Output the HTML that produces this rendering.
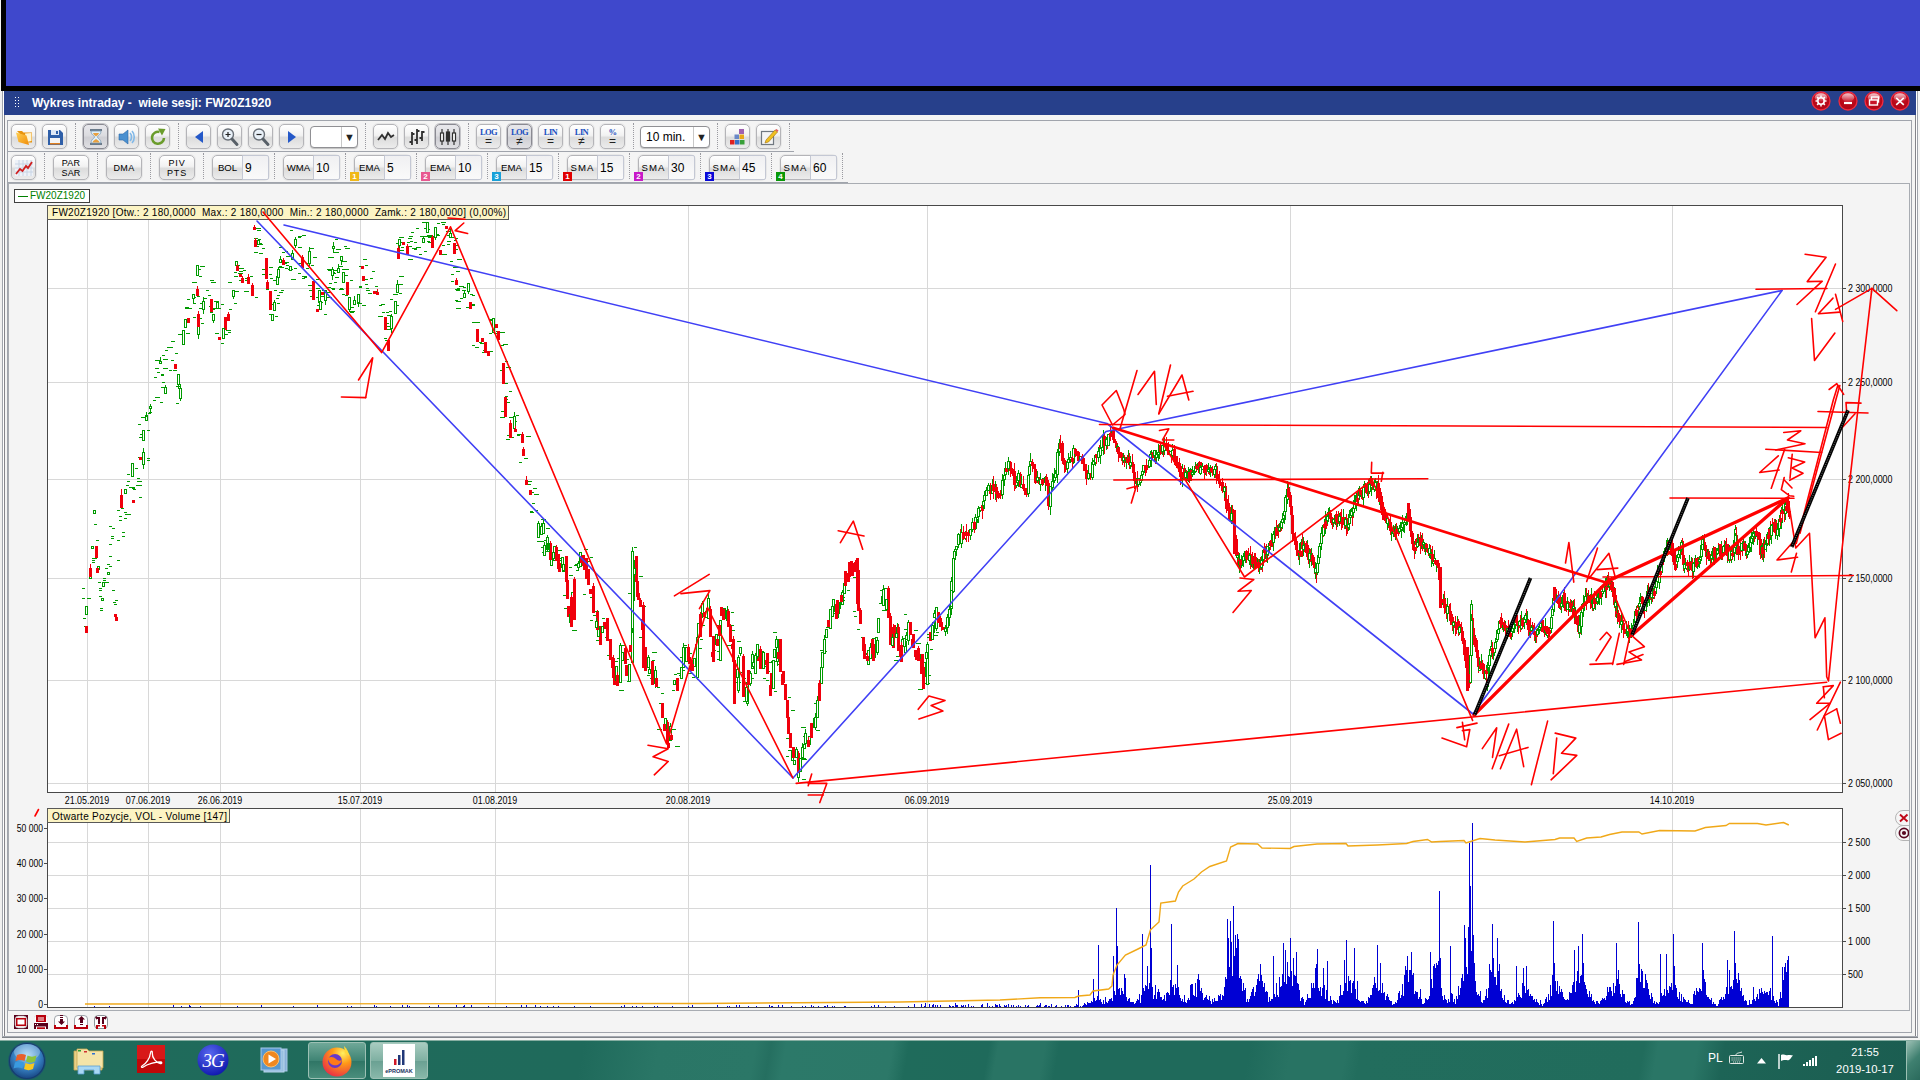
<!DOCTYPE html>
<html lang="pl"><head><meta charset="utf-8"><title>Wykres intraday - wiele sesji: FW20Z1920</title>
<style>
*{box-sizing:border-box;margin:0;padding:0}
html,body{width:1920px;height:1080px;overflow:hidden;background:#f4f4f4;font-family:"Liberation Sans",sans-serif;}
.abs{position:absolute}
#top{left:0;top:0;width:1920px;height:86px;background:#3f48cc}
#blk{left:0;top:86px;width:1920px;height:5px;background:#000}
#blkl{left:0;top:0;width:6px;height:91px;background:#000}
#title{left:4px;top:91px;width:1912px;z-index:2;height:24px;background:#27408b;color:#fff;font-weight:bold;font-size:12px;line-height:24px;}
#title span{position:absolute;left:28px;top:0;white-space:nowrap;letter-spacing:0px}
#wl{left:0;top:91px;width:5px;height:949px;background:linear-gradient(90deg,#f0f0f0 0,#f0f0f0 2px,#a0a4ac 2px,#a0a4ac 3px,#fff 3px,#fff 4px,#84848a 4px)}
#wcol{left:0;top:0;width:1px;height:91px;background:#f4f4f4}
#wr{left:1915px;top:91px;width:5px;height:949px;background:linear-gradient(90deg,#84848a 0,#84848a 1px,#fff 1px,#fff 2px,#a0a4ac 2px,#a0a4ac 3px,#f4f4f4 3px)}
#body{left:5px;top:115px;width:1910px;height:925px;background:#f4f4f4}
#fb{left:2px;top:1036px;width:1916px;height:2px;background:linear-gradient(#a4a8b0 0,#a4a8b0 1px,#80848a 1px);z-index:1}
#fb2{left:0;top:1038px;width:1920px;height:2px;background:#f4f4f4;z-index:1}
#outer{left:7px;top:120px;width:1905px;height:913px;border:1px solid #a0a4ac;background:#f4f4f4}
#inner{left:8px;top:183px;width:1902px;height:828px;border:1px solid #a8acb2;background:#f4f4f4}
.tb{position:absolute;height:25px;border:1px solid #b4b4b8;border-radius:5px;background:linear-gradient(#ffffff,#f2f2f2 45%,#dcdcdc 55%,#ececec);box-shadow:0 0 0 1px #e8e8e8}
.tb.on{border:1px solid #8a8a92;background:linear-gradient(#e8e8ec,#dcdce0 45%,#cfcfd4 55%,#e0e0e4);box-shadow:0 0 0 1px #c4c4c8}
.sep{position:absolute;width:0;border-left:1px dotted #9a9aa0;height:26px}
.lab{position:absolute;font-size:10px;color:#000;text-align:center;line-height:9px;white-space:nowrap}
.inp{position:absolute;height:25px;border:1px solid #c4c8d4;border-left:1px solid #c4c8d4;background:linear-gradient(#f0f0f2,#fafafa);font-size:12px;line-height:24px;padding-left:2px;border-radius:0 2px 2px 0}
.mk{position:absolute;width:9px;height:9px;color:#fff;font-size:8px;font-weight:bold;line-height:9px;text-align:center}
.cb{position:absolute;height:22px;border:1px solid #909094;border-radius:4px;background:#fff;font-size:12px;line-height:20px;padding-left:5px;box-shadow:0 1px 1px #c0c0c0}
.cb i{position:absolute;right:0;top:0;width:16px;height:20px;border-left:1px solid #c8c8c8;font-style:normal;font-size:11px;text-align:center;line-height:20px;color:#222}
#task{left:0;top:1040px;width:1920px;height:40px;background:linear-gradient(100deg,#1f6b5b 0px,#1f6a5b 575px,#2a7666 650px,#2b7767 745px,#256f60 760px,#2c7969 775px,#2c7868 880px,#1f6b5b 896px,#1f6a5b 975px,#297464 984px,#297464 1030px,#1f6a5b 1044px,#1f6a5b 1232px,#287363 1273px,#287363 1327px,#226d5d 1342px,#216c5c 1620px,#2a7666 1634px,#2a7666 1673px,#1d6456 1700px,#1b5c50 1920px);border-top:1px solid #86aea2}
.tk{position:absolute;top:1042px;height:37px;width:58px;border:1px solid #9cc0b4;border-radius:3px;background:linear-gradient(#6fa898,#3f8474 50%,#2f7565 51%,#4a8e7c)}
.tray{position:absolute;color:#fff;font-size:12px;white-space:nowrap}
</style></head><body>
<div class="abs" id="top"></div><div class="abs" id="blk"></div><div class="abs" id="blkl"></div>
<div class="abs" id="wcol"></div><div class="abs" id="wl"></div><div class="abs" id="wr"></div>
<div class="abs" id="title"><span>Wykres intraday -&nbsp; wiele sesji: FW20Z1920</span></div>
<div class="abs" id="body"></div><div class="abs" id="fb"></div><div class="abs" id="fb2"></div><div class="abs" id="outer"></div><div class="abs" id="inner"></div>
<div class="abs" style="left:8px;top:151px;width:786px;height:1px;background:#a0a4ac"></div><div class="abs" style="left:8px;top:182px;width:840px;height:1px;background:#a0a4ac"></div><div class="tb" style="left:11px;top:124px;width:25px"><svg width="22" height="22" viewBox="0 0 22 22" style="position:absolute;left:.5px;top:.5px"><defs><linearGradient id="fg" x1="0" y1="0" x2="1" y2="1"><stop offset="0" stop-color="#ffd050"/><stop offset="1" stop-color="#f08c08"/></linearGradient></defs><path d="M4 5h5l1.500 1.500h8.500v10h-4z" fill="#e8940c"/><path d="M12 7.500l6.500-.5v8l-5 1z" fill="#fff4d0"/><path d="M3 6.500l10.500 3 2.500 9.500-10.500-3z" fill="url(#fg)"/></svg></div><div class="tb" style="left:42px;top:124px;width:25px"><svg width="22" height="22" viewBox="0 0 22 22" style="position:absolute;left:.5px;top:.5px"><path d="M4 4h12l3 3v12H4z" fill="#2f5fa8"/><rect x="7" y="4" width="8" height="5" fill="#dfe8f4"/><rect x="12" y="5" width="2" height="3" fill="#2f5fa8"/><rect x="6" y="12" width="10" height="6" fill="#f4f4f4"/><rect x="6" y="17" width="10" height="1.5" fill="#e08020"/></svg></div><div class="tb on" style="left:83px;top:124px;width:25px"><svg width="22" height="22" viewBox="0 0 22 22" style="position:absolute;left:.5px;top:.5px"><path d="M5 3h12v2H5zM5 17h12v2H5z" fill="#6a7a8a"/><path d="M6 5h10c0 4-3.5 4.5-3.5 6s3.5 2 3.5 6H6c0-4 3.5-4.500 3.500-6S6 9 6 5z" fill="#dff0fa" stroke="#7a98b0" stroke-width=".8"/><path d="M8 7h6c-.5 2-2 2.500-3 3.500C10 9.500 8.500 9 8 7zM7.500 16.500c.5-2 2-2.500 3.500-3.500 1.500 1 3 1.500 3.500 3.500z" fill="#e8a040"/></svg></div><div class="tb" style="left:114px;top:124px;width:25px"><svg width="22" height="22" viewBox="0 0 22 22" style="position:absolute;left:.5px;top:.5px"><path d="M3 8h4l5-4v14l-5-4H3z" fill="#4a90d0" stroke="#2a68a8" stroke-width=".6"/><path d="M14 7c2 2 2 6 0 8M16 5c3 3 3 9 0 12" stroke="#80b8e8" stroke-width="1.600" fill="none"/></svg></div><div class="tb" style="left:145px;top:124px;width:25px"><svg width="22" height="22" viewBox="0 0 22 22" style="position:absolute;left:.5px;top:.5px"><path d="M17 12a6 6 0 1 1-4.500-6" stroke="#6a9c2c" stroke-width="2.600" fill="none"/><path d="M11 2.500l7.500.5-3.500 6.500z" fill="#6a9c2c"/></svg></div><div class="tb" style="left:186px;top:124px;width:25px"><svg width="22" height="22" viewBox="0 0 22 22" style="position:absolute;left:.5px;top:.5px"><path d="M15 5v12l-8-6z" fill="#2458c8"/></svg></div><div class="tb" style="left:217px;top:124px;width:25px"><svg width="22" height="22" viewBox="0 0 22 22" style="position:absolute;left:.5px;top:.5px"><circle cx="9" cy="8.500" r="5.500" fill="#e8f0f8" stroke="#6a7078" stroke-width="1.400"/><path d="M13 13l5 5.500" stroke="#586068" stroke-width="3" stroke-linecap="round"/><path d="M6.500 8.500h5M9 6v5" stroke="#222" stroke-width="1.200"/></svg></div><div class="tb" style="left:248px;top:124px;width:25px"><svg width="22" height="22" viewBox="0 0 22 22" style="position:absolute;left:.5px;top:.5px"><circle cx="9" cy="8.500" r="5.500" fill="#e8f0f8" stroke="#6a7078" stroke-width="1.400"/><path d="M13 13l5 5.500" stroke="#586068" stroke-width="3" stroke-linecap="round"/><path d="M6.500 8.500h5" stroke="#222" stroke-width="1.200"/></svg></div><div class="tb" style="left:279px;top:124px;width:25px"><svg width="22" height="22" viewBox="0 0 22 22" style="position:absolute;left:.5px;top:.5px"><path d="M7 5v12l8-6z" fill="#2458c8"/></svg></div><div class="tb" style="left:373px;top:124px;width:25px"><svg width="22" height="22" viewBox="0 0 22 22" style="position:absolute;left:.5px;top:.5px"><path d="M3 14l4-5 3 4 3-6 3 4 3-2" stroke="#303030" stroke-width="1.800" fill="none"/></svg></div><div class="tb" style="left:404px;top:124px;width:25px"><svg width="22" height="22" viewBox="0 0 22 22" style="position:absolute;left:.5px;top:.5px"><path d="M6 6v13M3.500 16H6M6 8h2.500M11 3v15M8.500 14H11M11 5h2.500M16 5v10M13.500 12H16M16 6h2.500" stroke="#303030" stroke-width="1.800" fill="none"/></svg></div><div class="tb on" style="left:435px;top:124px;width:25px"><svg width="22" height="22" viewBox="0 0 22 22" style="position:absolute;left:.5px;top:.5px"><path d="M5 3v16M11 3v16M17 3v16" stroke="#303030" stroke-width="1.200"/><rect x="3.500" y="7" width="3" height="8" fill="#fff" stroke="#303030" stroke-width="1.200"/><rect x="9.500" y="6" width="3" height="9" fill="#303030" stroke="#303030" stroke-width="1.200"/><rect x="15.500" y="7" width="3" height="8" fill="#fff" stroke="#303030" stroke-width="1.200"/></svg></div><div class="tb" style="left:725px;top:124px;width:25px"><svg width="22" height="22" viewBox="0 0 22 22" style="position:absolute;left:.5px;top:.5px"><rect x="12" y="3" width="5" height="5" fill="#a060b0"/><rect x="7.500" y="8.500" width="4.500" height="4.500" fill="#6888c8"/><rect x="12.500" y="8.500" width="4.500" height="4.500" fill="#e8a818"/><rect x="3" y="14" width="4.500" height="4.500" fill="#e02020"/><rect x="8" y="14" width="4.500" height="4.500" fill="#3870c8"/><rect x="13" y="14" width="4.500" height="4.500" fill="#38a038"/></svg></div><div class="tb" style="left:756px;top:124px;width:25px"><svg width="22" height="22" viewBox="0 0 22 22" style="position:absolute;left:.5px;top:.5px"><rect x="3.500" y="5.500" width="12" height="13" fill="#f4f4f4" stroke="#707880" stroke-width="1.200"/><path d="M8 14l9-10 2.500 2-9 10-3.500 1z" fill="#f0c020" stroke="#a07010" stroke-width=".6"/><path d="M17 4l2.500 2 1-1.500-2-1.500z" fill="#e06060"/></svg></div><div class="sep" style="left:75px;top:123px"></div><div class="sep" style="left:178px;top:123px"></div><div class="sep" style="left:365px;top:123px"></div><div class="sep" style="left:468px;top:123px"></div><div class="sep" style="left:633px;top:123px"></div><div class="sep" style="left:717px;top:123px"></div><div class="sep" style="left:789px;top:123px"></div><div class="tb" style="left:476px;top:124px;width:25px"><div style="position:absolute;left:0;top:3px;width:23px;text-align:center;font-family:'Liberation Serif',serif;font-size:8.500px;font-weight:bold;line-height:9px;color:#2050c0;letter-spacing:-.6px">LOG</div><div style="position:absolute;left:0;top:10px;width:23px;text-align:center;font-size:12px;line-height:12px;color:#222">=</div></div><div class="tb on" style="left:507px;top:124px;width:25px"><div style="position:absolute;left:0;top:3px;width:23px;text-align:center;font-family:'Liberation Serif',serif;font-size:8.500px;font-weight:bold;line-height:9px;color:#2050c0;letter-spacing:-.6px">LOG</div><div style="position:absolute;left:0;top:10px;width:23px;text-align:center;font-size:12px;line-height:12px;color:#222">&ne;</div></div><div class="tb" style="left:538px;top:124px;width:25px"><div style="position:absolute;left:0;top:3px;width:23px;text-align:center;font-family:'Liberation Serif',serif;font-size:8.500px;font-weight:bold;line-height:9px;color:#2050c0;letter-spacing:-.6px">LIN</div><div style="position:absolute;left:0;top:10px;width:23px;text-align:center;font-size:12px;line-height:12px;color:#222">=</div></div><div class="tb" style="left:569px;top:124px;width:25px"><div style="position:absolute;left:0;top:3px;width:23px;text-align:center;font-family:'Liberation Serif',serif;font-size:8.500px;font-weight:bold;line-height:9px;color:#2050c0;letter-spacing:-.6px">LIN</div><div style="position:absolute;left:0;top:10px;width:23px;text-align:center;font-size:12px;line-height:12px;color:#222">&ne;</div></div><div class="tb" style="left:600px;top:124px;width:25px"><div style="position:absolute;left:0;top:3px;width:23px;text-align:center;font-family:'Liberation Serif',serif;font-size:8.500px;font-weight:bold;line-height:9px;color:#2050c0;letter-spacing:-.6px">%</div><div style="position:absolute;left:0;top:10px;width:23px;text-align:center;font-size:12px;line-height:12px;color:#222">=</div></div><div class="cb" style="left:310px;top:126px;width:48px"><i>&#9660;</i></div><div class="cb" style="left:640px;top:126px;width:70px">10 min.<i>&#9660;</i></div><div class="tb" style="left:11px;top:155px;width:25px"><svg width="22" height="22" viewBox="0 0 22 22" style="position:absolute;left:.5px;top:.5px"><rect x="2" y="3" width="18" height="16" fill="#eef2f8"/><path d="M2 7h18M2 11h18M2 15h18M6 3v16M10 3v16M14 3v16M18 3v16" stroke="#c8d4e4" stroke-width="1"/><path d="M3 17l4-5 2.500 2 3.500-5 2 2 4-6" stroke="#d02020" stroke-width="1.800" fill="none"/></svg></div><div class="sep" style="left:44px;top:153px"></div><div class="sep" style="left:97px;top:153px"></div><div class="sep" style="left:150px;top:153px"></div><div class="sep" style="left:203px;top:153px"></div><div class="tb" style="left:53px;top:155px;width:36px"><div class="lab" style="left:0;width:34px;top:2px;font-size:9px;line-height:10px;letter-spacing:.2px">PAR<br>SAR</div></div><div class="tb" style="left:106px;top:155px;width:36px"><div class="lab" style="left:0;width:34px;top:7px;font-size:9px;line-height:10px;letter-spacing:.3px">DMA</div></div><div class="tb" style="left:159px;top:155px;width:36px"><div class="lab" style="left:0;width:34px;top:2px;font-size:9px;line-height:10px;letter-spacing:.8px">PIV<br>PTS</div></div><div class="tb" style="left:212px;top:155px;width:57px"><div class="lab" style="left:0;width:29px;top:7px;font-size:9.6px;line-height:10px;letter-spacing:0">BOL</div></div><div class="inp" style="left:242px;top:155px;width:27px">9</div><div class="sep" style="left:274px;top:153px"></div><div class="tb" style="left:283px;top:155px;width:57px"><div class="lab" style="left:0;width:29px;top:7px;font-size:9.6px;line-height:10px;letter-spacing:0">WMA</div></div><div class="inp" style="left:313px;top:155px;width:27px">10</div><div class="sep" style="left:345px;top:153px"></div><div class="tb" style="left:354px;top:155px;width:57px"><div class="lab" style="left:0;width:29px;top:7px;font-size:9.6px;line-height:10px;letter-spacing:0">EMA</div></div><div class="inp" style="left:384px;top:155px;width:27px">5</div><div class="sep" style="left:416px;top:153px"></div><div class="mk" style="left:350px;top:172px;background:#f0b818">1</div><div class="tb" style="left:425px;top:155px;width:57px"><div class="lab" style="left:0;width:29px;top:7px;font-size:9.6px;line-height:10px;letter-spacing:0">EMA</div></div><div class="inp" style="left:455px;top:155px;width:27px">10</div><div class="sep" style="left:487px;top:153px"></div><div class="mk" style="left:421px;top:172px;background:#e85890">2</div><div class="tb" style="left:496px;top:155px;width:57px"><div class="lab" style="left:0;width:29px;top:7px;font-size:9.6px;line-height:10px;letter-spacing:0">EMA</div></div><div class="inp" style="left:526px;top:155px;width:27px">15</div><div class="sep" style="left:558px;top:153px"></div><div class="mk" style="left:492px;top:172px;background:#18a0d8">3</div><div class="tb" style="left:567px;top:155px;width:57px"><div class="lab" style="left:0;width:29px;top:7px;font-size:9.6px;line-height:10px;letter-spacing:1.100px">SMA</div></div><div class="inp" style="left:597px;top:155px;width:27px">15</div><div class="sep" style="left:629px;top:153px"></div><div class="mk" style="left:563px;top:172px;background:#e00000">1</div><div class="tb" style="left:638px;top:155px;width:57px"><div class="lab" style="left:0;width:29px;top:7px;font-size:9.6px;line-height:10px;letter-spacing:1.100px">SMA</div></div><div class="inp" style="left:668px;top:155px;width:27px">30</div><div class="sep" style="left:700px;top:153px"></div><div class="mk" style="left:634px;top:172px;background:#c818c8">2</div><div class="tb" style="left:709px;top:155px;width:57px"><div class="lab" style="left:0;width:29px;top:7px;font-size:9.6px;line-height:10px;letter-spacing:1.100px">SMA</div></div><div class="inp" style="left:739px;top:155px;width:27px">45</div><div class="sep" style="left:771px;top:153px"></div><div class="mk" style="left:705px;top:172px;background:#0808d8">3</div><div class="tb" style="left:780px;top:155px;width:57px"><div class="lab" style="left:0;width:29px;top:7px;font-size:9.6px;line-height:10px;letter-spacing:1.100px">SMA</div></div><div class="inp" style="left:810px;top:155px;width:27px">60</div><div class="sep" style="left:842px;top:153px"></div><div class="mk" style="left:776px;top:172px;background:#089808">4</div><div class="abs" style="left:14px;top:189px;width:76px;height:14px;border:1px solid #404040;background:#fff;font-size:10px;line-height:12px;color:#008000;white-space:nowrap"><span style="position:absolute;left:3px;top:6px;width:10px;height:1px;background:#008000"></span><span style="position:absolute;left:15px;top:0">FW20Z1920</span></div><svg class="abs" style="left:1811px;top:91px;z-index:3" width="20" height="20" viewBox="0 0 20 20"><defs><radialGradient id="rggear" cx=".5" cy=".25" r=".8"><stop offset="0" stop-color="#d82038"/><stop offset=".6" stop-color="#b80818"/><stop offset="1" stop-color="#b00818"/></radialGradient><linearGradient id="glgear" x1="0" y1="0" x2="0" y2="1"><stop offset="0" stop-color="#fff" stop-opacity=".75"/><stop offset="1" stop-color="#fff" stop-opacity=".05"/></linearGradient></defs><circle cx="10" cy="10" r="9" fill="url(#rggear)" stroke="#f02c40" stroke-width="1.300"/><ellipse cx="10" cy="6.500" rx="6.200" ry="4.200" fill="url(#glgear)"/><circle cx="10" cy="10" r="3.200" fill="none" stroke="#fff" stroke-width="1.600"/><path d="M10 4.500v2M10 13.500v2M4.500 10h2M13.500 10h2M6.100 6.100l1.400 1.400M12.500 12.500l1.400 1.400M6.100 13.900l1.400-1.400M12.500 7.500l1.400-1.400" stroke="#fff" stroke-width="1.500"/></svg><svg class="abs" style="left:1838px;top:91px;z-index:3" width="20" height="20" viewBox="0 0 20 20"><defs><radialGradient id="rgmin" cx=".5" cy=".25" r=".8"><stop offset="0" stop-color="#d82038"/><stop offset=".6" stop-color="#b80818"/><stop offset="1" stop-color="#b00818"/></radialGradient><linearGradient id="glmin" x1="0" y1="0" x2="0" y2="1"><stop offset="0" stop-color="#fff" stop-opacity=".75"/><stop offset="1" stop-color="#fff" stop-opacity=".05"/></linearGradient></defs><circle cx="10" cy="10" r="9" fill="url(#rgmin)" stroke="#f02c40" stroke-width="1.300"/><ellipse cx="10" cy="6.500" rx="6.200" ry="4.200" fill="url(#glmin)"/><path d="M6 12h8" stroke="#fff" stroke-width="2.200"/></svg><svg class="abs" style="left:1864px;top:91px;z-index:3" width="20" height="20" viewBox="0 0 20 20"><defs><radialGradient id="rgrest" cx=".5" cy=".25" r=".8"><stop offset="0" stop-color="#d82038"/><stop offset=".6" stop-color="#b80818"/><stop offset="1" stop-color="#b00818"/></radialGradient><linearGradient id="glrest" x1="0" y1="0" x2="0" y2="1"><stop offset="0" stop-color="#fff" stop-opacity=".75"/><stop offset="1" stop-color="#fff" stop-opacity=".05"/></linearGradient></defs><circle cx="10" cy="10" r="9" fill="url(#rgrest)" stroke="#f02c40" stroke-width="1.300"/><ellipse cx="10" cy="6.500" rx="6.200" ry="4.200" fill="url(#glrest)"/><rect x="7.500" y="6" width="7" height="5" fill="none" stroke="#fff" stroke-width="1.400"/><rect x="5.500" y="9" width="8" height="5" fill="#c81428" stroke="#fff" stroke-width="1.400"/></svg><svg class="abs" style="left:1890px;top:91px;z-index:3" width="20" height="20" viewBox="0 0 20 20"><defs><radialGradient id="rgx" cx=".5" cy=".25" r=".8"><stop offset="0" stop-color="#d82038"/><stop offset=".6" stop-color="#b80818"/><stop offset="1" stop-color="#b00818"/></radialGradient><linearGradient id="glx" x1="0" y1="0" x2="0" y2="1"><stop offset="0" stop-color="#fff" stop-opacity=".75"/><stop offset="1" stop-color="#fff" stop-opacity=".05"/></linearGradient></defs><circle cx="10" cy="10" r="9" fill="url(#rgx)" stroke="#f02c40" stroke-width="1.300"/><ellipse cx="10" cy="6.500" rx="6.200" ry="4.200" fill="url(#glx)"/><path d="M6.200 6.800l7.600 7M13.800 6.800l-7.600 7" stroke="#fff" stroke-width="1.600"/></svg><svg class="abs" style="left:15px;top:97px;z-index:3" width="5" height="12"><g fill="#fff"><rect x="0" y="0" width="1" height="1"/><rect x="0" y="3" width="1" height="1"/><rect x="0" y="6" width="1" height="1"/><rect x="0" y="9" width="1" height="1"/><rect x="3" y="0" width="1" height="1"/><rect x="3" y="3" width="1" height="1"/><rect x="3" y="6" width="1" height="1"/><rect x="3" y="9" width="1" height="1"/></g></svg><svg class="abs" style="left:0;top:0" width="1920" height="1080" viewBox="0 0 1920 1080" font-family="Liberation Sans, sans-serif"><rect x="47" y="206" width="1795" height="586" fill="#fff"/><rect x="47" y="808" width="1795" height="200" fill="#fff"/><path d="M47 288.5H1842M47 382.5H1842M47 479.5H1842M47 578.5H1842M47 680.5H1842M47 783.5H1842M87.5 206V792M87.5 808V1008M148.5 206V792M148.5 808V1008M220.5 206V792M220.5 808V1008M360.5 206V792M360.5 808V1008M495.5 206V792M495.5 808V1008M688.5 206V792M688.5 808V1008M927.5 206V792M927.5 808V1008M1290.5 206V792M1290.5 808V1008M1672.5 206V792M1672.5 808V1008M47 842.5H1842M47 875.5H1842M47 908.5H1842M47 941.5H1842M47 974.5H1842" stroke="#d8d8d8" stroke-width="1" fill="none" shape-rendering="crispEdges"/><defs><clipPath id="cpm"><rect x="47" y="206" width="1795" height="586"/></clipPath></defs><g clip-path="url(#cpm)"><path d="M147 460.5h3M147 458.5h3M138 457.5h3M138 424.5h3M139 437.5h5M140 434.5h3M141 417.5h4M147 430.5h3M149 412.5h3M148 413.5h3M145 415.5h3M153 400.5h3M155 397.5h5M157 372.5h3M155 368.5h4M155 360.5h5M162 382.5h3M154 377.5h3M160.5 357V361M162 355.5h3M163 368.5h5M163 359.5h5M161 374.5h3M161 387.5h3M160 402.5h3M161 375.5h3M167 347.5h3M171 341.5h4M165 350.5h3M170 347.5h3M171 360.5h3M169 370.5h3M175 353.5h3M173 370.5h4M176 403.5h3M176 386.5h3M177 386.5h3M180 334.5h3M178 334.5h5M186 333.5h4M189 308.5h3M185 308.5h4M187 299.5h3M185 307.5h4M193 297.5h3M197 296.5h3M192 282.5h5M200 266.5h5M198 269.5h3M199 276.5h3M193 303.5h3M193 317.5h3M201 323.5h3M203.5 297V301M203.5 310V314M200 303.5h4M199 308.5h3M199 318.5h3M206 290.5h3M204 298.5h3M210 280.5h4M211 282.5h5M212 308.5h5M214 301.5h5M208 295.5h3M210 312.5h3M216 308.5h5M209 306.5h4M212 308.5h4M212 309.5h3M221 304.5h3M215 333.5h4M221 343.5h3M226 330.5h5M224 326.5h3M224 334.5h4M228 332.5h3M225 318.5h4M228 282.5h4M235 291.5h4M234 303.5h3M229 309.5h3M236.5 266V270M238 273.5h5M237 265.5h3M239 271.5h4M234 272.5h3M234 276.5h4M239 268.5h5M244 291.5h5M243 270.5h3M239 280.5h5M245 280.5h5M245 278.5h5M250 276.5h3M255 297.5h3M247 283.5h3M256 228.5h5M257 230.5h4M256 246.5h3M260 244.5h3M254 252.5h4M254 238.5h4M262 248.5h3M258 239.5h3M259 253.5h4M259 243.5h3M265 267.5h3M269 274.5h3M262 269.5h4M270 278.5h3M269 267.5h4M262 274.5h5M269 297.5h3M266 289.5h3M275 316.5h3M269 314.5h5M277 295.5h3M270 304.5h4M277 303.5h3M276 298.5h3M277.5 272V276M279 292.5h4M274 290.5h3M281 290.5h3M279 266.5h3M273 280.5h4M282 252.5h3M286 262.5h3M279 247.5h4M279 267.5h5M285 251.5h3M286 256.5h5M284 262.5h3M285 268.5h3M283 263.5h4M288 269.5h5M286 265.5h3M294 268.5h3M291 279.5h5M298 236.5h4M298 247.5h4M290 230.5h3M292.5 250V253M298 237.5h3M302 235.5h4M294 244.5h3M297 263.5h5M298 273.5h3M304 277.5h3M306 268.5h3M302 278.5h3M302 276.5h5M311 265.5h3M306 263.5h3M310 248.5h4M313 257.5h4M310 296.5h3M309 290.5h3M316 279.5h3M308 285.5h5M319 305.5h3M320 302.5h3M317 305.5h3M324 314.5h3M319.5 303V307M322 290.5h3M316 288.5h4M316 297.5h3M320 296.5h5M327 297.5h5M329 283.5h3M332 273.5h4M331 288.5h4M327 292.5h3M327 287.5h4M327 287.5h3M332.5 267V269M332.5 276V280M328 270.5h3M327 269.5h4M336 249.5h5M335 239.5h3M331 257.5h3M336 252.5h3M328 257.5h3M334 252.5h3M334 282.5h3M332 289.5h3M332 272.5h3M332 272.5h3M334 270.5h4M342 269.5h4M335 277.5h4M341 261.5h5M341.5 261V265M338 266.5h5M345 248.5h5M343 261.5h4M344 246.5h3M339 289.5h5M346 269.5h3M344 275.5h4M340 288.5h3M350 280.5h3M342 294.5h3M349.5 310V312M345 295.5h3M350 311.5h5M350 312.5h4M357 303.5h5M351 307.5h3M359 287.5h3M362 305.5h4M359 266.5h3M365 265.5h3M363 259.5h4M366 290.5h4M365 279.5h3M365 284.5h3M359 286.5h3M366 288.5h3M369 293.5h3M368 293.5h3M370 278.5h3M372 271.5h3M375 286.5h3M381 304.5h4M374 291.5h4M382 312.5h3M378 316.5h5M386 323.5h3M379 305.5h3M389 311.5h3M387 315.5h5M387 329.5h4M384 338.5h3M385 340.5h4M391.5 314V316M391.5 329V333M386 312.5h3M387 326.5h3M387 315.5h3M390 299.5h3M396 305.5h3M393 294.5h5M398 284.5h5M399 276.5h5M399 293.5h3M400 250.5h4M396 243.5h4M401 242.5h3M401 247.5h3M399 237.5h5M408 259.5h5M410 241.5h3M411 232.5h3M416 228.5h3M407 242.5h3M409 236.5h4M408 238.5h4M409 246.5h3M414 242.5h3M419 254.5h3M412 248.5h5M418 247.5h3M420 236.5h5M414 249.5h3M416 247.5h4M427 229.5h3M424 251.5h3M424 236.5h5M427 235.5h5M424 228.5h5M428 237.5h4M422 222.5h5M427 236.5h5M428 242.5h5M427 241.5h3M429 235.5h3M436 234.5h3M431 236.5h5M437 223.5h3M442 254.5h5M437 235.5h3M447 235.5h5M442 224.5h3M441 222.5h5M442 245.5h3M447 244.5h3M446 231.5h4M451 237.5h3M455 249.5h3M454 240.5h3M447 241.5h4M455 245.5h4M457 259.5h5M455 238.5h3M453 267.5h3M450 261.5h3M456 271.5h4M451 274.5h3M456 267.5h4M459 286.5h5M451 281.5h3M457 288.5h3M455 289.5h5M462 290.5h3M455 300.5h3M460 298.5h3M463 287.5h3M456 301.5h5M456 308.5h5M456 290.5h4M472 295.5h3M470 294.5h3M463 290.5h3M472 305.5h3M466 307.5h3M472 304.5h3M472 322.5h3M475 322.5h5M472 345.5h3M479 342.5h3M475 347.5h4M484 344.5h3M483 350.5h3M488 351.5h5M480 343.5h5M482 352.5h3M484 351.5h3M496 331.5h3M490 319.5h3M494 324.5h3M490 320.5h3M489 333.5h3M502 332.5h3M499 332.5h3M494 333.5h3M501 345.5h3M504 344.5h4M503 344.5h3M500 370.5h4M505 361.5h3M506 367.5h5M505 383.5h3M504 405.5h3M501 411.5h3M500 417.5h5M507 402.5h3M505 396.5h3M505 399.5h3M509 391.5h3M513 421.5h4M507 435.5h5M506 439.5h4M509 417.5h4M516 415.5h3M510 437.5h4M518 434.5h3M517 435.5h3M526 436.5h5M517 434.5h3M519 462.5h3M524 458.5h4M527 484.5h4M529 492.5h5M527 481.5h5M534 494.5h5M533 488.5h4M532 503.5h3M530 512.5h4M530 511.5h3M541 541.5h3M541 519.5h5M540 528.5h4M535 510.5h3M546 528.5h4M541 547.5h3M537 541.5h5M546 551.5h3M542 552.5h4M544.5 542V545M544 540.5h3M551 554.5h5M557 560.5h5M562 571.5h3M562.5 568V570M558 550.5h4M559 558.5h3M569 575.5h4M564 608.5h5M563 595.5h4M572 630.5h5M575 564.5h4M569 567.5h3M574 565.5h3M576 570.5h3M584 549.5h4M587 561.5h3M590 557.5h3M583 594.5h3M585 573.5h4M590 620.5h3M594 611.5h5M590 597.5h3M600 631.5h4M593 615.5h3M596 640.5h3M602 618.5h3M608 639.5h3M605 637.5h3M613 661.5h5M607 655.5h3M619 674.5h3M619 690.5h5M622 645.5h3M624 659.5h5M617 658.5h3M620 656.5h3M622 654.5h3M627 681.5h3M628 593.5h3M633.5 556V560M634 547.5h3M635 560.5h3M639 576.5h4M642 606.5h4M639 637.5h4M647 675.5h3M648.5 655V657M652 652.5h5M653 679.5h5M649.5 666V669M650 678.5h3M652 660.5h3M653 677.5h3M657 687.5h3M659 703.5h3M661 693.5h3M657 729.5h5M669 739.5h3M675 746.5h5M672 729.5h4M670.5 723V726M672 690.5h3M674 674.5h3M675 683.5h3M682 670.5h3M677 673.5h3M679 675.5h3M680 657.5h3M684 645.5h3M689 653.5h3M693 664.5h5M689 666.5h3M692 677.5h3M688 673.5h5M699 648.5h3M700 639.5h3M704 617.5h3M701 625.5h4M700 613.5h3M708.5 594V598M705 611.5h3M713 640.5h3M717 659.5h5M717 651.5h4M717 625.5h3M724 613.5h5M713 650.5h3M727.5 606V610M731 612.5h3M725 616.5h3M731 625.5h3M726 645.5h5M732 630.5h3M736 682.5h5M738.5 655V657M738.5 691V693M734 675.5h3M737 641.5h4M741 672.5h3M742 678.5h4M751 678.5h3M743 701.5h3M750.5 671V673M750.5 684V686M757 660.5h3M752.5 651V654M754 659.5h3M763 678.5h3M759 653.5h3M766 653.5h3M771 661.5h5M771 675.5h4M763 666.5h3M766 680.5h3M774 691.5h3M767 671.5h3M768 662.5h4M777.5 662V666M773 632.5h4M777 664.5h4M788 697.5h3M791 710.5h4M786 738.5h3M786 756.5h3M788 750.5h3M802 779.5h4M793 762.5h3M803 759.5h4M803 736.5h3M803 758.5h3M805.5 729V733M801 727.5h5M805 740.5h3M811 727.5h3M816 730.5h4M816 711.5h3M814 703.5h3M821.5 663V667M824 651.5h3M820 650.5h3M826 627.5h3M834 605.5h3M833 604.5h4M832 607.5h4M834.5 604V607M842 600.5h3M840 597.5h5M842.5 590V592M847 590.5h3M856 561.5h3M857.5 560V564M853 577.5h3M852 568.5h5M853 611.5h3M854 616.5h3M857 629.5h3M861 637.5h3M868 658.5h3M865 654.5h3M870.5 643V647M865 653.5h5M872 638.5h3M879 603.5h3M882 610.5h5M880 590.5h5M882.5 593V596M884 588.5h3M887 593.5h3M897.5 623V627M894 660.5h5M896 656.5h5M905.5 637V641M908.5 620V622M908.5 641V645M904 629.5h3M904 614.5h3M914 630.5h4M916 643.5h5M917 654.5h4M921 665.5h4M926 675.5h5M919.5 651V654M925 683.5h5M918 689.5h5M927.5 642V644M930 649.5h3M927 634.5h3M927 637.5h3M936 632.5h3M934 635.5h4M936.5 629V631M942 627.5h5M94 524.5h3M109 526.5h3M112 528.5h3M122 532.5h3M122 536.5h3M111 536.5h3M111 538.5h3M117 540.5h3M96 540.5h3M109 544.5h3M109 556.5h3M117 560.5h3M92 558.5h5M92 560.5h3M92 562.5h3M107 564.5h3M109 566.5h3M105 568.5h3M103 578.5h3M103 580.5h3M98 582.5h3M105 582.5h4M82 588.5h3M99 588.5h3M99 590.5h3M112 590.5h3M82 598.5h3M87 598.5h4M99 596.5h3M115 600.5h3M113 602.5h3M114 604.5h3M100 608.5h3M100 610.5h3M83 618.5h3M84 626.5h3M117 510.5h3M119 516.5h3M119 520.5h3M124 518.5h3M125 514.5h6M124 512.5h3M121 508.5h3M127 481.5h3M137 481.5h5M126 485.5h3M136 485.5h6M129 487.5h5M133 489.5h3M139 497.5h3M127 474.5h3M135 468.5h3M137 478.5h3M949.5 605V609M949.5 618V626M954.5 549V551M954.5 560V561M965.5 531V533M965.5 539V540M970.5 536V540M975.5 514V517M975.5 529V530M980.5 511V512M984.5 491V495M984.5 501V509M995.5 481V489M995.5 492V500M1005.5 462V468M1005.5 475V479M1029.5 464V466M1043.5 481V485M1054.5 468V474M1054.5 481V483M1059.5 439V443M1059.5 452V456M1068.5 453V459M1073.5 445V448M1073.5 463V464M1095.5 454V455M1095.5 463V466M1103.5 430V436M1103.5 447V455M1112.5 430V431M1112.5 436V437M1128.5 450V458M1128.5 462V465M1136.5 478V479M1136.5 484V487M1140.5 483V486M1143.5 473V474M1147.5 468V469M1151.5 450V454M1151.5 459V467M1159.5 451V459M1175.5 451V457M1175.5 462V465M1182.5 464V468M1182.5 479V487M1190.5 468V469M1190.5 480V481M1194.5 473V475M1205.5 465V466M1205.5 474V475M1241.5 555V559M1241.5 566V568M1244.5 556V557M1247.5 551V553M1247.5 559V560M1253.5 556V557M1253.5 563V569M1259.5 559V563M1259.5 566V574M1265.5 553V559M1271.5 533V541M1271.5 546V547M1277.5 525V527M1283.5 512V513M1283.5 519V522M1289.5 487V495M1289.5 499V505M1301.5 539V542M1301.5 554V557M1307.5 540V548M1307.5 554V558M1319.5 544V546M1319.5 558V562M1325.5 511V519M1325.5 526V534M1328.5 508V516M1328.5 519V522M1337.5 524V527M1343.5 509V517M1343.5 521V523M1349.5 510V514M1349.5 524V530M1355.5 495V501M1355.5 506V509M1358.5 488V494M1358.5 500V504M1361.5 490V493M1364.5 481V487M1364.5 491V497M1367.5 482V486M1367.5 490V496M1379.5 489V492M1379.5 497V505M1391.5 525V528M1391.5 533V541M1397.5 526V529M1397.5 533V534M1400.5 522V525M1400.5 530V532M1403.5 528V532M1406.5 515V517M1406.5 520V526M1415.5 539V541M1415.5 550V554M1421.5 535V539M1421.5 547V549M1433.5 564V566M1436.5 560V561M1436.5 564V572M1445.5 598V606M1451.5 616V617M1451.5 623V624M1457.5 616V622M1457.5 627V630M1475.5 635V641M1475.5 645V649M1481.5 654V662M1481.5 669V670M1487.5 662V665M1490.5 656V664M1493.5 648V649M1493.5 654V660M1496.5 630V638M1499.5 620V621M1505.5 621V625M1505.5 631V637M1511.5 625V628M1511.5 637V640M1514.5 621V624M1514.5 629V633M1517.5 619V621M1517.5 626V632M1523.5 617V619M1523.5 625V627M1529.5 621V625M1529.5 629V637M1535.5 637V643M1538.5 627V629M1547.5 636V638M1550.5 625V627M1550.5 632V634M1553.5 612V614M1559.5 600V602M1559.5 605V609M1571.5 600V604M1571.5 609V612M1577.5 624V630M1583.5 595V603M1583.5 611V617M1589.5 595V597M1589.5 602V603M1595.5 602V610M1598.5 589V597M1598.5 600V604M1601.5 597V605M1607.5 575V577M1607.5 587V588M1613.5 585V587M1613.5 591V595M1619.5 622V628M1631.5 623V629M1631.5 636V638M1634.5 621V622M1634.5 628V634M1637.5 605V606M1637.5 615V617M1640.5 593V601M1640.5 604V607M1649.5 587V593M1649.5 600V606M1655.5 585V586M1661.5 573V575M1664.5 552V553M1664.5 558V561M1667.5 538V540M1667.5 547V551M1673.5 544V550M1673.5 556V562M1676.5 557V559M1685.5 558V562M1685.5 567V569M1691.5 557V565M1697.5 557V561M1697.5 567V569M1700.5 549V557M1700.5 561V564M1709.5 551V557M1721.5 541V549M1721.5 554V560M1727.5 555V563M1733.5 540V548M1739.5 553V555M1745.5 541V544M1745.5 548V556M1748.5 544V547M1748.5 553V555M1751.5 529V537M1751.5 544V552M1757.5 537V545M1763.5 539V543M1763.5 554V562M1766.5 546V552M1769.5 527V528M1769.5 540V546M1775.5 519V523M1775.5 533V539M1778.5 522V528M1781.5 507V510M1781.5 523V529M1787.5 500V501M1787.5 508V509M198.5 312V316M198.5 335V339M798.5 757V761M798.5 778V782M1471.5 600V604M1471.5 637V641M1579.5 615V619M1579.5 634V638M1735.5 525V529M1735.5 547V551" stroke="#009a00" stroke-width="1" fill="none" shape-rendering="crispEdges"/><path d="M142.5 430.5h2v10h-2zM159.5 361.5h2v2h-2zM184.5 319.5h2v8h-2zM196.5 265.5h2v10h-2zM202.5 301.5h2v8h-2zM216.5 302.5h2v6h-2zM235.5 261.5h2v4h-2zM276.5 276.5h2v8h-2zM291.5 253.5h2v6h-2zM318.5 290.5h2v12h-2zM331.5 269.5h2v6h-2zM340.5 256.5h2v4h-2zM348.5 297.5h2v12h-2zM390.5 316.5h2v12h-2zM539.5 527.5h2v4h-2zM543.5 545.5h2v10h-2zM553.5 546.5h2v14h-2zM561.5 557.5h2v10h-2zM571.5 592.5h2v8h-2zM579.5 552.5h2v14h-2zM632.5 560.5h2v40h-2zM647.5 657.5h2v10h-2zM648.5 669.5h2v4h-2zM669.5 726.5h2v14h-2zM680.5 667.5h2v11h-2zM693.5 658.5h2v8h-2zM697.5 623.5h2v14h-2zM707.5 598.5h2v20h-2zM715.5 634.5h2v10h-2zM726.5 610.5h2v10h-2zM723.5 608.5h2v10h-2zM737.5 657.5h2v33h-2zM749.5 673.5h2v10h-2zM751.5 654.5h2v14h-2zM761.5 651.5h2v8h-2zM776.5 639.5h2v22h-2zM791.5 750.5h2v10h-2zM804.5 733.5h2v10h-2zM808.5 736.5h2v8h-2zM813.5 718.5h2v8h-2zM820.5 667.5h2v16h-2zM825.5 629.5h2v8h-2zM832.5 599.5h2v12h-2zM833.5 607.5h2v6h-2zM841.5 592.5h2v12h-2zM843.5 583.5h2v10h-2zM846.5 574.5h2v4h-2zM856.5 564.5h2v12h-2zM869.5 647.5h2v11h-2zM875.5 637.5h2v10h-2zM881.5 596.5h2v6h-2zM896.5 627.5h2v10h-2zM904.5 641.5h2v11h-2zM907.5 622.5h2v18h-2zM918.5 654.5h2v4h-2zM926.5 644.5h2v40h-2zM935.5 607.5h2v21h-2zM91.5 546.5h2v2h-2zM89.5 576.5h2v2h-2zM85.5 606.5h2v8h-2zM131.5 463.5h2v13h-2zM948.5 609.5h2v8h-2zM953.5 551.5h2v8h-2zM964.5 533.5h2v5h-2zM969.5 529.5h2v6h-2zM974.5 517.5h2v11h-2zM979.5 507.5h2v3h-2zM983.5 495.5h2v5h-2zM994.5 489.5h2v2h-2zM1004.5 468.5h2v6h-2zM1028.5 466.5h2v8h-2zM1042.5 478.5h2v2h-2zM1053.5 474.5h2v6h-2zM1058.5 443.5h2v8h-2zM1067.5 459.5h2v3h-2zM1072.5 448.5h2v14h-2zM1094.5 455.5h2v7h-2zM1102.5 436.5h2v10h-2zM1111.5 431.5h2v4h-2zM1127.5 458.5h2v3h-2zM1135.5 479.5h2v4h-2zM1139.5 479.5h2v3h-2zM1142.5 465.5h2v7h-2zM1146.5 465.5h2v2h-2zM1150.5 454.5h2v4h-2zM1158.5 445.5h2v5h-2zM1174.5 457.5h2v4h-2zM1181.5 468.5h2v10h-2zM1189.5 469.5h2v10h-2zM1193.5 470.5h2v2h-2zM1197.5 463.5h2v6h-2zM1204.5 466.5h2v7h-2zM1240.5 559.5h2v6h-2zM1243.5 553.5h2v2h-2zM1246.5 553.5h2v5h-2zM1252.5 557.5h2v5h-2zM1258.5 563.5h2v2h-2zM1264.5 546.5h2v6h-2zM1270.5 541.5h2v4h-2zM1276.5 527.5h2v8h-2zM1282.5 513.5h2v5h-2zM1288.5 495.5h2v3h-2zM1300.5 542.5h2v11h-2zM1306.5 548.5h2v5h-2zM1318.5 546.5h2v11h-2zM1324.5 519.5h2v6h-2zM1327.5 516.5h2v2h-2zM1336.5 519.5h2v4h-2zM1342.5 517.5h2v3h-2zM1348.5 514.5h2v9h-2zM1354.5 501.5h2v4h-2zM1357.5 494.5h2v5h-2zM1360.5 493.5h2v3h-2zM1363.5 487.5h2v3h-2zM1366.5 486.5h2v3h-2zM1378.5 492.5h2v4h-2zM1390.5 528.5h2v4h-2zM1396.5 529.5h2v3h-2zM1399.5 525.5h2v4h-2zM1402.5 522.5h2v5h-2zM1405.5 517.5h2v2h-2zM1414.5 541.5h2v8h-2zM1420.5 539.5h2v7h-2zM1432.5 560.5h2v3h-2zM1435.5 561.5h2v2h-2zM1441.5 599.5h2v4h-2zM1444.5 606.5h2v2h-2zM1450.5 617.5h2v5h-2zM1456.5 622.5h2v4h-2zM1474.5 641.5h2v3h-2zM1480.5 662.5h2v6h-2zM1486.5 665.5h2v9h-2zM1489.5 649.5h2v6h-2zM1492.5 649.5h2v4h-2zM1495.5 638.5h2v3h-2zM1498.5 621.5h2v7h-2zM1504.5 625.5h2v5h-2zM1510.5 628.5h2v8h-2zM1513.5 624.5h2v4h-2zM1516.5 621.5h2v4h-2zM1522.5 619.5h2v5h-2zM1528.5 625.5h2v3h-2zM1534.5 632.5h2v4h-2zM1537.5 629.5h2v3h-2zM1546.5 630.5h2v5h-2zM1549.5 627.5h2v4h-2zM1552.5 598.5h2v13h-2zM1558.5 602.5h2v2h-2zM1570.5 604.5h2v4h-2zM1576.5 620.5h2v3h-2zM1582.5 603.5h2v7h-2zM1588.5 597.5h2v4h-2zM1594.5 598.5h2v3h-2zM1597.5 597.5h2v2h-2zM1600.5 591.5h2v5h-2zM1606.5 577.5h2v9h-2zM1612.5 587.5h2v3h-2zM1618.5 618.5h2v3h-2zM1630.5 629.5h2v6h-2zM1633.5 622.5h2v5h-2zM1636.5 606.5h2v8h-2zM1639.5 601.5h2v2h-2zM1648.5 593.5h2v6h-2zM1654.5 586.5h2v5h-2zM1660.5 562.5h2v10h-2zM1663.5 553.5h2v4h-2zM1666.5 540.5h2v6h-2zM1672.5 550.5h2v5h-2zM1675.5 559.5h2v5h-2zM1678.5 549.5h2v5h-2zM1684.5 562.5h2v4h-2zM1690.5 565.5h2v3h-2zM1696.5 561.5h2v5h-2zM1699.5 557.5h2v3h-2zM1708.5 557.5h2v3h-2zM1720.5 549.5h2v4h-2zM1726.5 550.5h2v4h-2zM1732.5 548.5h2v8h-2zM1738.5 548.5h2v4h-2zM1744.5 544.5h2v3h-2zM1747.5 547.5h2v5h-2zM1750.5 537.5h2v6h-2zM1756.5 532.5h2v4h-2zM1762.5 543.5h2v10h-2zM1765.5 542.5h2v3h-2zM1768.5 528.5h2v11h-2zM1774.5 523.5h2v9h-2zM1777.5 528.5h2v2h-2zM1780.5 510.5h2v12h-2zM1786.5 501.5h2v6h-2zM197.5 316.5h2v18h-2zM797.5 761.5h2v16h-2zM1470.5 604.5h2v32h-2zM1578.5 619.5h2v14h-2zM1734.5 529.5h2v17h-2z" stroke="#009a00" stroke-width="1" fill="#fff" shape-rendering="crispEdges"/><path d="M254.5 225V230M267.5 280V289M283.5 258V265M398.5 245V259M407.5 244V255M432.5 235V248M456.5 278V285M510.5 420V438M522.5 432V443M556.5 545V561M600.5 626V645M613.5 655V678M625.5 646V664M637.5 578V597M643.5 602V646M667.5 720V744M733.5 636V662M743.5 654V697M760.5 646V669M788.5 714V734M798.5 751V773M890.5 613V645M898.5 624V651M90.5 564V568M121.5 489V495M960.5 529V544M990.5 483V500M1000.5 490V499M1010.5 461V477M1015.5 483V489M1020.5 472V487M1024.5 485V495M1038.5 477V484M1048.5 480V510M1064.5 458V473M1078.5 451V463M1084.5 458V471M1090.5 473V480M1099.5 445V456M1107.5 439V449M1116.5 441V452M1124.5 455V467M1132.5 454V473M1155.5 450V464M1163.5 439V457M1167.5 445V455M1171.5 450V463M1179.5 458V476M1186.5 470V482M1201.5 462V472M1209.5 470V475M1212.5 466V476M1216.5 463V484M1221.5 482V490M1225.5 483V509M1229.5 509V520M1232.5 505V517M1235.5 529V544M1238.5 552V567M1250.5 546V569M1256.5 557V567M1262.5 557V572M1268.5 545V556M1274.5 530V543M1280.5 525V532M1286.5 494V505M1292.5 515V542M1295.5 532V547M1298.5 550V560M1304.5 541V552M1310.5 549V562M1313.5 557V565M1316.5 563V583M1322.5 531V543M1331.5 515V525M1334.5 518V524M1340.5 512V524M1346.5 514V536M1352.5 507V526M1370.5 476V491M1373.5 482V490M1376.5 481V499M1382.5 496V515M1385.5 509V523M1388.5 519V528M1394.5 526V537M1409.5 509V523M1412.5 532V550M1418.5 534V546M1424.5 542V552M1427.5 546V553M1430.5 545V559M1439.5 565V581M1448.5 607V614M1460.5 624V630M1463.5 635V646M1466.5 650V676M1469.5 675V688M1472.5 610V633M1478.5 656V673M1484.5 664V679M1502.5 618V630M1508.5 620V637M1520.5 615V632M1526.5 609V625M1532.5 622V634M1541.5 620V632M1544.5 627V637M1556.5 589V603M1562.5 598V607M1565.5 597V611M1568.5 601V616M1574.5 599V624M1580.5 625V634M1586.5 588V610M1592.5 596V611M1604.5 583V590M1610.5 578V590M1616.5 595V618M1622.5 616V625M1628.5 621V639M1643.5 604V614M1646.5 599V612M1652.5 587V602M1658.5 568V583M1670.5 539V555M1682.5 538V561M1688.5 566V577M1694.5 561V571M1706.5 547V565M1712.5 552V560M1715.5 548V563M1718.5 543V554M1724.5 540V553M1730.5 547V561M1736.5 527V555M1742.5 541V556M1754.5 531V542M1760.5 533V559M1772.5 518V533M1784.5 502V522" stroke="#f0000c" stroke-width="1" fill="none" shape-rendering="crispEdges"/><path d="M174 364h3v5h-3zM224 317h3v13h-3zM239 274h3v3h-3zM253 227h3v3h-3zM266 282h3v7h-3zM282 260h3v5h-3zM312 281h3v19h-3zM361 266h3v3h-3zM373 291h3v3h-3zM397 248h3v11h-3zM406 246h3v9h-3zM431 237h3v11h-3zM445 226h3v3h-3zM455 280h3v5h-3zM469 302h3v7h-3zM481 338h3v4h-3zM497 331h3v9h-3zM509 423h3v15h-3zM521 434h3v9h-3zM529 490h3v5h-3zM555 547h3v14h-3zM564 566h3v5h-3zM567 606h3v11h-3zM583 561h3v9h-3zM589 589h3v5h-3zM599 628h3v17h-3zM606 618h3v23h-3zM612 658h3v20h-3zM613 670h3v15h-3zM624 648h3v16h-3zM625 665h3v11h-3zM636 581h3v16h-3zM642 605h3v41h-3zM661 703h3v15h-3zM666 722h3v22h-3zM684 650h3v5h-3zM688 657h3v7h-3zM712 636h3v26h-3zM732 639h3v23h-3zM742 656h3v41h-3zM759 649h3v20h-3zM770 673h3v16h-3zM779 639h3v33h-3zM781 674h3v11h-3zM787 717h3v17h-3zM797 753h3v20h-3zM850 561h3v15h-3zM862 637h3v14h-3zM871 639h3v15h-3zM889 616h3v29h-3zM897 627h3v24h-3zM912 634h3v14h-3zM914 650h3v7h-3zM929 632h3v9h-3zM85 626h3v7h-3zM89 568h3v9h-3zM120 495h3v13h-3zM942 627h3v3h-3zM959 535h3v8h-3zM989 485h3v9h-3zM999 493h3v3h-3zM1009 462h3v9h-3zM1014 483h3v3h-3zM1019 474h3v13h-3zM1023 488h3v3h-3zM1033 464h3v5h-3zM1037 477h3v6h-3zM1047 483h3v23h-3zM1063 460h3v5h-3zM1077 452h3v9h-3zM1083 464h3v7h-3zM1089 473h3v4h-3zM1098 451h3v4h-3zM1106 439h3v6h-3zM1115 443h3v5h-3zM1119 452h3v6h-3zM1123 457h3v6h-3zM1131 462h3v5h-3zM1154 450h3v8h-3zM1162 447h3v4h-3zM1166 448h3v3h-3zM1170 451h3v4h-3zM1178 466h3v6h-3zM1185 471h3v9h-3zM1200 466h3v3h-3zM1208 470h3v4h-3zM1211 469h3v3h-3zM1215 466h3v12h-3zM1220 482h3v4h-3zM1224 486h3v15h-3zM1228 511h3v5h-3zM1231 513h3v4h-3zM1234 537h3v5h-3zM1237 556h3v10h-3zM1249 554h3v11h-3zM1255 561h3v4h-3zM1261 560h3v6h-3zM1267 547h3v5h-3zM1273 533h3v6h-3zM1279 526h3v5h-3zM1285 498h3v6h-3zM1291 515h3v19h-3zM1294 540h3v5h-3zM1297 550h3v6h-3zM1303 543h3v8h-3zM1309 552h3v6h-3zM1312 561h3v4h-3zM1315 567h3v8h-3zM1321 533h3v4h-3zM1330 517h3v6h-3zM1333 518h3v4h-3zM1339 515h3v6h-3zM1345 518h3v10h-3zM1351 513h3v5h-3zM1369 484h3v6h-3zM1372 484h3v5h-3zM1375 483h3v8h-3zM1381 502h3v13h-3zM1384 515h3v4h-3zM1387 519h3v6h-3zM1393 532h3v4h-3zM1408 515h3v4h-3zM1411 533h3v11h-3zM1417 542h3v4h-3zM1423 543h3v5h-3zM1426 548h3v4h-3zM1429 549h3v9h-3zM1438 567h3v13h-3zM1447 607h3v4h-3zM1453 621h3v4h-3zM1459 626h3v4h-3zM1462 641h3v3h-3zM1465 654h3v14h-3zM1468 678h3v6h-3zM1471 618h3v12h-3zM1477 657h3v10h-3zM1483 670h3v9h-3zM1501 622h3v5h-3zM1507 628h3v8h-3zM1519 623h3v5h-3zM1525 615h3v6h-3zM1531 626h3v6h-3zM1540 622h3v6h-3zM1543 627h3v6h-3zM1555 595h3v6h-3zM1561 601h3v4h-3zM1564 605h3v6h-3zM1567 602h3v8h-3zM1573 607h3v9h-3zM1579 626h3v4h-3zM1585 596h3v6h-3zM1591 597h3v11h-3zM1603 584h3v4h-3zM1609 582h3v4h-3zM1615 601h3v16h-3zM1621 620h3v5h-3zM1624 630h3v4h-3zM1627 627h3v10h-3zM1642 604h3v4h-3zM1645 600h3v4h-3zM1651 595h3v4h-3zM1657 574h3v8h-3zM1669 545h3v4h-3zM1681 541h3v14h-3zM1687 566h3v5h-3zM1693 563h3v4h-3zM1702 536h3v7h-3zM1705 549h3v8h-3zM1711 554h3v4h-3zM1714 554h3v5h-3zM1717 549h3v4h-3zM1723 546h3v7h-3zM1729 549h3v11h-3zM1735 535h3v12h-3zM1741 544h3v4h-3zM1753 532h3v4h-3zM1759 539h3v16h-3zM1771 526h3v6h-3zM1783 504h3v10h-3zM504 397h3v20h-3zM642 635h3v33h-3zM1233 510h3v44h-3z" fill="#f0000c" shape-rendering="crispEdges"/><path d="M143.5 448V452M143.5 465V469M146.5 412V416M165.5 385V387M180.5 384V388M180.5 399V401M278.5 267V269M278.5 278V282M325.5 301V305M333.5 242V246M333.5 249V253M354.5 296V300M399.5 246V248M423.5 236V238M435.5 238V240M450.5 229V233M468.5 292V294M514.5 412V416M514.5 429V431M538.5 521V523M541.5 523V526M551.5 552V555M578.5 561V563M578.5 568V570M646.5 656V659M655.5 666V670M655.5 684V688M683.5 643V647M702.5 601V603M702.5 614V618M706.5 608V611M747.5 704V706M796.5 747V749M817.5 696V700M832.5 603V606M877.5 653V655M902.5 636V639M906.5 632V635M933.5 633V635M934.5 610V613M945.5 625V628M945.5 632V636M951.5 589V590M951.5 609V615M956.5 550V556M961.5 524V532M961.5 544V548M972.5 518V522M972.5 530V532M977.5 514V517M977.5 520V523M986.5 487V490M992.5 479V485M1002.5 474V480M1002.5 495V499M1016.5 476V482M1016.5 486V488M1021.5 476V484M1030.5 453V461M1030.5 465V471M1040.5 473V479M1040.5 485V491M1045.5 476V477M1045.5 483V491M1050.5 507V515M1055.5 470V473M1070.5 451V457M1070.5 460V463M1080.5 460V461M1092.5 458V462M1092.5 478V480M1100.5 440V448M1100.5 456V464M1117.5 444V446M1117.5 449V450M1126.5 457V460M1126.5 463V469M1141.5 471V475M1149.5 467V468M1156.5 450V454M1156.5 458V464M1164.5 438V444M1164.5 451V455M1172.5 444V450M1172.5 456V459M1188.5 467V471M1188.5 481V482M1195.5 462V466M1195.5 472V473M1202.5 463V466M1210.5 465V467M1210.5 473V477M1214.5 475V478M1239.5 553V561M1239.5 565V573M1242.5 556V557M1242.5 561V565M1245.5 555V563M1251.5 565V567M1257.5 558V561M1257.5 564V567M1263.5 549V550M1263.5 560V561M1269.5 541V543M1269.5 548V550M1284.5 516V524M1287.5 481V489M1287.5 500V504M1299.5 543V551M1299.5 557V565M1305.5 543V544M1305.5 550V551M1311.5 548V556M1311.5 560V566M1317.5 555V563M1317.5 573V575M1320.5 542V543M1320.5 547V553M1323.5 524V525M1329.5 507V513M1335.5 519V525M1350.5 509V515M1353.5 500V508M1353.5 513V517M1356.5 493V499M1356.5 505V511M1359.5 486V490M1371.5 476V484M1371.5 488V496M1374.5 479V485M1374.5 490V492M1377.5 481V482M1389.5 521V522M1395.5 524V528M1395.5 534V540M1401.5 522V524M1401.5 530V538M1404.5 519V522M1404.5 525V533M1407.5 510V513M1407.5 519V525M1419.5 537V539M1419.5 545V546M1425.5 543V544M1425.5 549V555M1431.5 552V555M1431.5 559V567M1434.5 550V558M1434.5 562V564M1443.5 594V600M1443.5 605V607M1470.5 653V655M1479.5 658V666M1485.5 679V680M1488.5 663V664M1488.5 668V674M1491.5 640V646M1491.5 651V657M1494.5 647V648M1494.5 653V656M1497.5 640V642M1503.5 623V624M1503.5 629V632M1509.5 630V633M1512.5 620V628M1512.5 632V636M1515.5 612V616M1521.5 611V619M1521.5 629V630M1524.5 615V619M1524.5 623V629M1527.5 611V619M1527.5 623V627M1539.5 622V626M1539.5 630V634M1545.5 618V626M1545.5 633V635M1551.5 614V617M1551.5 629V633M1554.5 588V594M1554.5 600V604M1557.5 597V598M1557.5 601V602M1563.5 592V595M1563.5 604V608M1569.5 610V612M1575.5 608V616M1575.5 620V621M1581.5 604V612M1581.5 627V635M1584.5 601V602M1584.5 606V607M1587.5 593V597M1587.5 603V604M1593.5 596V600M1593.5 609V611M1599.5 589V591M1599.5 599V605M1605.5 578V586M1605.5 590V598M1611.5 577V583M1611.5 586V592M1617.5 606V614M1617.5 618V624M1626.5 621V629M1626.5 633V636M1629.5 625V628M1629.5 637V643M1632.5 626V628M1632.5 633V637M1635.5 609V611M1635.5 622V623M1641.5 596V597M1647.5 585V591M1647.5 603V607M1653.5 588V590M1653.5 598V599M1656.5 588V594M1659.5 566V570M1659.5 583V589M1665.5 553V554M1671.5 542V544M1671.5 547V551M1677.5 554V555M1677.5 562V568M1680.5 546V548M1680.5 551V559M1686.5 562V563M1686.5 569V570M1689.5 555V563M1689.5 570V571M1695.5 555V558M1701.5 541V545M1701.5 557V560M1707.5 549V552M1707.5 556V557M1713.5 546V548M1713.5 557V563M1716.5 548V551M1716.5 555V559M1719.5 544V545M1719.5 553V556M1725.5 541V544M1725.5 552V555M1731.5 550V551M1731.5 560V563M1734.5 539V547M1734.5 553V561M1737.5 541V545M1737.5 549V555M1743.5 539V542M1743.5 549V551M1749.5 537V543M1749.5 547V553M1752.5 532V535M1752.5 539V543M1755.5 537V539M1761.5 545V546M1761.5 554V558M1767.5 532V534M1767.5 544V546M1773.5 522V524M1773.5 529V532M1779.5 515V519M1779.5 529V537M1785.5 501V504M1785.5 514V520M951.5 577V581M951.5 607V611M1487.5 668V672M1487.5 687V691M1667.5 538V542M1667.5 552V556" stroke="#009a00" stroke-width="1" fill="none" shape-rendering="crispEdges"/><path d="M142.5 452.5h2v12h-2zM145.5 416.5h2v4h-2zM164.5 387.5h2v6h-2zM179.5 388.5h2v10h-2zM271.5 314.5h2v6h-2zM277.5 269.5h2v8h-2zM289.5 266.5h2v4h-2zM324.5 290.5h2v10h-2zM332.5 246.5h2v2h-2zM342.5 272.5h2v10h-2zM353.5 300.5h2v4h-2zM394.5 301.5h2v12h-2zM398.5 239.5h2v6h-2zM422.5 238.5h2v4h-2zM434.5 227.5h2v10h-2zM449.5 233.5h2v4h-2zM467.5 283.5h2v8h-2zM513.5 416.5h2v12h-2zM537.5 523.5h2v14h-2zM540.5 526.5h2v8h-2zM550.5 555.5h2v10h-2zM569.5 614.5h2v8h-2zM577.5 563.5h2v4h-2zM597.5 626.5h2v10h-2zM615.5 666.5h2v14h-2zM621.5 652.5h2v8h-2zM631.5 622.5h2v40h-2zM645.5 659.5h2v6h-2zM654.5 670.5h2v13h-2zM664.5 718.5h2v10h-2zM682.5 647.5h2v20h-2zM685.5 647.5h2v14h-2zM701.5 603.5h2v10h-2zM705.5 611.5h2v6h-2zM736.5 669.5h2v8h-2zM746.5 682.5h2v21h-2zM752.5 662.5h2v4h-2zM773.5 649.5h2v8h-2zM795.5 749.5h2v8h-2zM799.5 758.5h2v13h-2zM803.5 744.5h2v4h-2zM816.5 700.5h2v17h-2zM821.5 652.5h2v15h-2zM829.5 609.5h2v19h-2zM831.5 606.5h2v10h-2zM838.5 602.5h2v6h-2zM867.5 650.5h2v14h-2zM876.5 640.5h2v12h-2zM877.5 618.5h2v14h-2zM901.5 639.5h2v6h-2zM905.5 635.5h2v4h-2zM923.5 662.5h2v14h-2zM932.5 622.5h2v10h-2zM933.5 613.5h2v4h-2zM97.5 566.5h2v3h-2zM102.5 582.5h2v4h-2zM124.5 489.5h2v4h-2zM944.5 628.5h2v3h-2zM950.5 590.5h2v18h-2zM955.5 546.5h2v3h-2zM960.5 532.5h2v11h-2zM971.5 522.5h2v7h-2zM976.5 517.5h2v2h-2zM985.5 490.5h2v5h-2zM991.5 485.5h2v8h-2zM1001.5 480.5h2v14h-2zM1015.5 482.5h2v3h-2zM1020.5 484.5h2v3h-2zM1029.5 461.5h2v3h-2zM1039.5 479.5h2v5h-2zM1044.5 477.5h2v5h-2zM1049.5 486.5h2v20h-2zM1054.5 473.5h2v4h-2zM1069.5 457.5h2v2h-2zM1079.5 456.5h2v3h-2zM1091.5 462.5h2v15h-2zM1099.5 448.5h2v7h-2zM1107.5 434.5h2v11h-2zM1116.5 446.5h2v2h-2zM1125.5 460.5h2v2h-2zM1140.5 475.5h2v5h-2zM1148.5 460.5h2v6h-2zM1155.5 454.5h2v3h-2zM1163.5 444.5h2v6h-2zM1171.5 450.5h2v5h-2zM1187.5 471.5h2v9h-2zM1194.5 466.5h2v5h-2zM1201.5 466.5h2v3h-2zM1209.5 467.5h2v5h-2zM1213.5 469.5h2v5h-2zM1238.5 561.5h2v3h-2zM1241.5 557.5h2v3h-2zM1244.5 551.5h2v3h-2zM1250.5 560.5h2v4h-2zM1256.5 561.5h2v2h-2zM1262.5 550.5h2v9h-2zM1268.5 543.5h2v4h-2zM1274.5 527.5h2v7h-2zM1280.5 521.5h2v6h-2zM1283.5 511.5h2v4h-2zM1286.5 489.5h2v10h-2zM1298.5 551.5h2v5h-2zM1304.5 544.5h2v5h-2zM1310.5 556.5h2v3h-2zM1316.5 563.5h2v9h-2zM1319.5 543.5h2v3h-2zM1322.5 525.5h2v10h-2zM1328.5 513.5h2v4h-2zM1334.5 515.5h2v3h-2zM1349.5 515.5h2v2h-2zM1352.5 508.5h2v4h-2zM1355.5 499.5h2v5h-2zM1358.5 490.5h2v5h-2zM1370.5 484.5h2v3h-2zM1373.5 485.5h2v4h-2zM1376.5 482.5h2v7h-2zM1388.5 522.5h2v3h-2zM1394.5 528.5h2v5h-2zM1400.5 524.5h2v5h-2zM1403.5 522.5h2v2h-2zM1406.5 513.5h2v5h-2zM1418.5 539.5h2v5h-2zM1424.5 544.5h2v4h-2zM1430.5 555.5h2v3h-2zM1433.5 558.5h2v3h-2zM1442.5 600.5h2v4h-2zM1469.5 655.5h2v27h-2zM1478.5 666.5h2v4h-2zM1484.5 671.5h2v7h-2zM1487.5 664.5h2v3h-2zM1490.5 646.5h2v4h-2zM1493.5 648.5h2v4h-2zM1496.5 630.5h2v9h-2zM1502.5 624.5h2v4h-2zM1508.5 633.5h2v2h-2zM1511.5 628.5h2v3h-2zM1514.5 616.5h2v8h-2zM1520.5 619.5h2v9h-2zM1523.5 619.5h2v3h-2zM1526.5 619.5h2v3h-2zM1538.5 626.5h2v3h-2zM1544.5 626.5h2v6h-2zM1550.5 617.5h2v11h-2zM1553.5 594.5h2v5h-2zM1556.5 598.5h2v2h-2zM1562.5 595.5h2v8h-2zM1568.5 605.5h2v4h-2zM1574.5 616.5h2v3h-2zM1580.5 612.5h2v14h-2zM1583.5 602.5h2v3h-2zM1586.5 597.5h2v5h-2zM1592.5 600.5h2v8h-2zM1598.5 591.5h2v7h-2zM1601.5 591.5h2v2h-2zM1604.5 586.5h2v3h-2zM1610.5 583.5h2v2h-2zM1616.5 614.5h2v3h-2zM1625.5 629.5h2v3h-2zM1628.5 628.5h2v8h-2zM1631.5 628.5h2v4h-2zM1634.5 611.5h2v10h-2zM1640.5 597.5h2v4h-2zM1646.5 591.5h2v11h-2zM1652.5 590.5h2v7h-2zM1655.5 580.5h2v7h-2zM1658.5 570.5h2v12h-2zM1664.5 548.5h2v4h-2zM1670.5 544.5h2v2h-2zM1676.5 555.5h2v6h-2zM1679.5 548.5h2v2h-2zM1685.5 563.5h2v5h-2zM1688.5 563.5h2v6h-2zM1694.5 558.5h2v6h-2zM1700.5 545.5h2v11h-2zM1706.5 552.5h2v3h-2zM1712.5 548.5h2v8h-2zM1715.5 551.5h2v3h-2zM1718.5 545.5h2v7h-2zM1724.5 544.5h2v7h-2zM1730.5 551.5h2v8h-2zM1733.5 547.5h2v5h-2zM1736.5 545.5h2v3h-2zM1742.5 542.5h2v6h-2zM1748.5 543.5h2v3h-2zM1751.5 535.5h2v3h-2zM1754.5 532.5h2v4h-2zM1760.5 546.5h2v7h-2zM1766.5 534.5h2v9h-2zM1772.5 524.5h2v4h-2zM1778.5 519.5h2v9h-2zM1784.5 504.5h2v9h-2zM950.5 581.5h2v25h-2zM1486.5 672.5h2v14h-2zM1666.5 542.5h2v9h-2z" stroke="#009a00" stroke-width="1" fill="#fff" shape-rendering="crispEdges"/><path d="M197.5 286V296M228.5 312V321M237.5 264V271M248.5 274V284M255.5 238V247M302.5 255V268M523.5 447V456M550.5 541V560M559.5 561V572M597.5 610V630M640.5 598V607M671.5 733V740M728.5 609V627M852.5 568V576M855.5 560V569M858.5 568V611M867.5 653V661M888.5 586V618M893.5 624V648M901.5 642V662M940.5 616V627M966.5 524V542M982.5 501V519M996.5 484V502M1012.5 468V476M1026.5 488V497M1035.5 466V484M1060.5 435V453M1065.5 461V472M1075.5 448V457M1086.5 464V485M1096.5 454V464M1104.5 433V454M1113.5 428V443M1122.5 453V465M1129.5 453V469M1133.5 462V476M1137.5 471V492M1145.5 465V476M1152.5 452V460M1160.5 444V455M1168.5 442V455M1176.5 456V468M1180.5 463V485M1184.5 465V480M1191.5 470V481M1199.5 461V473M1206.5 464V476M1218.5 474V482M1222.5 478V493M1226.5 496V513M1230.5 507V521M1233.5 509V527M1236.5 535V556M1248.5 548V560M1254.5 553V569M1260.5 557V570M1266.5 544V562M1272.5 534V547M1278.5 524V538M1290.5 492V509M1293.5 531V540M1296.5 537V556M1302.5 534V557M1308.5 545V564M1314.5 557V574M1326.5 514V529M1332.5 518V529M1338.5 511V524M1341.5 509V530M1344.5 517V529M1347.5 518V534M1362.5 488V500M1365.5 483V493M1368.5 479V498M1380.5 488V510M1383.5 513V520M1386.5 514V522M1398.5 528V536M1410.5 509V537M1416.5 538V551M1422.5 533V551M1428.5 549V556M1437.5 560V566M1440.5 571V601M1446.5 604V619M1449.5 604V615M1452.5 614V631M1455.5 616V636M1458.5 619V636M1461.5 622V634M1464.5 638V661M1473.5 620V640M1476.5 638V654M1482.5 660V674M1500.5 617V628M1506.5 625V639M1518.5 621V634M1530.5 618V638M1533.5 625V634M1536.5 629V643M1542.5 618V632M1548.5 627V640M1560.5 594V610M1566.5 601V612M1572.5 601V617M1578.5 615V634M1590.5 594V609M1596.5 593V604M1608.5 572V588M1614.5 588V608M1620.5 615V625M1623.5 622V638M1638.5 603V611M1644.5 602V618M1650.5 592V600M1662.5 557V565M1668.5 541V554M1674.5 550V568M1683.5 555V571M1692.5 558V579M1698.5 557V564M1704.5 534V550M1710.5 554V568M1722.5 548V560M1728.5 544V561M1740.5 542V560M1746.5 544V559M1758.5 532V540M1764.5 537V558M1770.5 521V537M1776.5 520V535M1782.5 509V520M1788.5 493V517" stroke="#f0000c" stroke-width="1" fill="none" shape-rendering="crispEdges"/><path d="M187 318h3v5h-3zM196 289h3v7h-3zM210 299h3v13h-3zM218 337h3v3h-3zM227 314h3v7h-3zM236 266h3v5h-3zM247 277h3v7h-3zM254 240h3v7h-3zM301 257h3v11h-3zM316 309h3v3h-3zM362 276h3v5h-3zM384 317h3v13h-3zM476 329h3v13h-3zM487 351h3v5h-3zM495 324h3v4h-3zM522 449h3v7h-3zM549 543h3v17h-3zM558 563h3v9h-3zM565 556h3v26h-3zM566 580h3v19h-3zM580 556h3v7h-3zM587 569h3v16h-3zM596 612h3v18h-3zM603 622h3v7h-3zM611 657h3v11h-3zM635 556h3v26h-3zM639 600h3v7h-3zM641 619h3v11h-3zM670 735h3v5h-3zM676 678h3v13h-3zM690 660h3v11h-3zM695 644h3v5h-3zM711 652h3v5h-3zM716 639h3v7h-3zM720 607h3v9h-3zM727 611h3v16h-3zM731 644h3v5h-3zM747 670h3v15h-3zM757 656h3v5h-3zM766 653h3v21h-3zM769 685h3v11h-3zM777 652h3v7h-3zM784 684h3v16h-3zM789 733h3v15h-3zM810 723h3v15h-3zM835 604h3v15h-3zM847 573h3v9h-3zM851 571h3v5h-3zM854 562h3v7h-3zM857 570h3v41h-3zM866 656h3v5h-3zM887 588h3v30h-3zM892 627h3v21h-3zM893 625h3v9h-3zM900 645h3v17h-3zM911 639h3v7h-3zM915 653h3v7h-3zM920 659h3v15h-3zM114 614h3v3h-3zM96 568h3v5h-3zM132 500h3v3h-3zM939 621h3v6h-3zM965 532h3v4h-3zM981 505h3v6h-3zM995 487h3v7h-3zM1005 468h3v4h-3zM1011 469h3v5h-3zM1025 490h3v5h-3zM1034 469h3v14h-3zM1059 443h3v6h-3zM1064 461h3v9h-3zM1074 449h3v5h-3zM1085 470h3v9h-3zM1095 454h3v4h-3zM1103 436h3v10h-3zM1112 430h3v10h-3zM1121 453h3v8h-3zM1128 457h3v8h-3zM1132 466h3v6h-3zM1136 479h3v5h-3zM1144 465h3v5h-3zM1151 453h3v5h-3zM1159 445h3v9h-3zM1167 450h3v5h-3zM1175 456h3v10h-3zM1179 471h3v6h-3zM1183 468h3v11h-3zM1190 470h3v3h-3zM1198 462h3v11h-3zM1205 465h3v7h-3zM1217 478h3v3h-3zM1221 482h3v9h-3zM1225 499h3v6h-3zM1229 511h3v9h-3zM1232 515h3v9h-3zM1235 539h3v17h-3zM1247 554h3v6h-3zM1253 557h3v4h-3zM1259 563h3v4h-3zM1265 546h3v8h-3zM1271 540h3v4h-3zM1277 528h3v4h-3zM1289 495h3v12h-3zM1292 533h3v4h-3zM1295 541h3v9h-3zM1301 542h3v7h-3zM1307 548h3v12h-3zM1313 563h3v5h-3zM1325 520h3v6h-3zM1331 520h3v3h-3zM1337 519h3v4h-3zM1340 517h3v5h-3zM1343 517h3v8h-3zM1346 526h3v4h-3zM1361 494h3v5h-3zM1364 486h3v4h-3zM1367 485h3v7h-3zM1379 492h3v10h-3zM1382 515h3v5h-3zM1385 517h3v4h-3zM1391 529h3v3h-3zM1397 529h3v5h-3zM1409 517h3v14h-3zM1412 544h3v5h-3zM1415 540h3v5h-3zM1421 539h3v6h-3zM1427 549h3v3h-3zM1436 562h3v4h-3zM1439 579h3v20h-3zM1445 606h3v7h-3zM1448 608h3v5h-3zM1451 617h3v8h-3zM1454 624h3v4h-3zM1457 621h3v9h-3zM1460 628h3v4h-3zM1463 640h3v15h-3zM1466 669h3v5h-3zM1472 628h3v10h-3zM1475 640h3v12h-3zM1481 663h3v5h-3zM1499 620h3v4h-3zM1505 626h3v10h-3zM1517 621h3v5h-3zM1529 626h3v6h-3zM1532 627h3v5h-3zM1535 632h3v5h-3zM1541 622h3v6h-3zM1547 630h3v4h-3zM1559 602h3v6h-3zM1565 605h3v5h-3zM1571 605h3v4h-3zM1577 619h3v13h-3zM1589 598h3v5h-3zM1595 599h3v4h-3zM1607 578h3v8h-3zM1613 588h3v17h-3zM1619 618h3v7h-3zM1622 623h3v7h-3zM1637 605h3v3h-3zM1643 605h3v5h-3zM1649 593h3v5h-3zM1661 561h3v4h-3zM1667 542h3v6h-3zM1673 550h3v15h-3zM1682 555h3v10h-3zM1691 566h3v5h-3zM1697 560h3v4h-3zM1703 542h3v5h-3zM1709 557h3v3h-3zM1721 548h3v6h-3zM1727 550h3v11h-3zM1739 548h3v4h-3zM1745 545h3v8h-3zM1757 533h3v6h-3zM1763 543h3v7h-3zM1769 529h3v8h-3zM1775 523h3v12h-3zM1781 509h3v5h-3zM1787 501h3v12h-3zM265 258h3v21h-3zM502 363h3v21h-3zM733 675h3v29h-3zM1439 567h3v41h-3zM1407 503h3v18h-3z" fill="#f0000c" shape-rendering="crispEdges"/><path d="M150.5 404V406M150.5 409V413M178.5 385V389M193.5 299V303M213.5 321V323M233.5 297V299M274.5 300V302M280.5 256V259M295.5 237V239M295.5 246V248M309.5 247V251M309.5 264V266M320.5 299V301M338.5 264V268M358.5 303V307M397.5 280V284M464.5 290V293M543.5 519V523M547.5 535V537M547.5 550V552M548.5 540V543M553.5 549V552M596.5 618V621M620.5 643V645M697.5 678V680M740.5 654V656M746.5 684V687M755.5 653V655M757.5 657V659M776.5 636V639M802.5 743V747M802.5 758V760M815.5 713V717M815.5 728V730M824.5 635V639M838.5 614V618M883.5 585V589M892.5 634V637M932.5 622V625M947.5 614V617M947.5 628V634M953.5 556V558M953.5 592V593M958.5 533V534M958.5 545V548M978.5 506V508M978.5 517V523M983.5 506V509M988.5 483V485M1004.5 472V475M1004.5 480V486M1008.5 457V461M1008.5 469V475M1018.5 470V473M1018.5 481V487M1028.5 472V475M1028.5 494V497M1037.5 471V477M1037.5 481V483M1052.5 473V481M1052.5 488V490M1057.5 449V452M1057.5 475V483M1067.5 460V462M1067.5 469V473M1088.5 465V473M1088.5 479V480M1093.5 460V461M1098.5 447V451M1098.5 458V462M1106.5 437V439M1106.5 446V450M1123.5 453V457M1123.5 461V463M1130.5 456V462M1130.5 466V469M1138.5 485V487M1142.5 468V471M1142.5 475V478M1150.5 451V454M1150.5 461V463M1154.5 456V462M1158.5 444V452M1158.5 455V461M1162.5 452V455M1185.5 469V472M1185.5 478V481M1192.5 466V472M1192.5 475V477M1200.5 465V467M1200.5 474V475M1208.5 463V469M1215.5 464V466M1215.5 470V473M1224.5 486V487M1224.5 492V498M1231.5 505V513M1231.5 521V524M1237.5 558V560M1243.5 554V556M1243.5 561V567M1249.5 553V555M1249.5 561V565M1261.5 556V560M1261.5 568V570M1267.5 555V563M1273.5 531V534M1273.5 543V551M1279.5 523V527M1279.5 531V532M1282.5 523V529M1285.5 495V497M1285.5 512V520M1303.5 537V545M1303.5 550V556M1309.5 549V553M1309.5 560V568M1315.5 562V568M1315.5 573V579M1318.5 556V557M1318.5 564V572M1321.5 527V533M1321.5 544V550M1327.5 512V516M1327.5 521V524M1333.5 523V527M1339.5 513V516M1339.5 522V526M1345.5 517V519M1345.5 526V529M1348.5 521V524M1348.5 528V531M1351.5 508V511M1351.5 516V517M1354.5 495V503M1354.5 509V510M1363.5 484V487M1363.5 498V506M1369.5 478V484M1369.5 492V494M1375.5 478V482M1375.5 487V491M1387.5 514V518M1387.5 524V530M1393.5 525V531M1393.5 534V537M1399.5 526V528M1399.5 532V533M1402.5 515V523M1402.5 528V531M1405.5 516V520M1405.5 523V525M1417.5 534V542M1417.5 547V548M1423.5 540V542M1423.5 545V549M1429.5 544V548M1429.5 554V558M1447.5 598V606M1447.5 614V622M1453.5 621V622M1453.5 626V634M1459.5 626V627M1459.5 633V635M1471.5 614V620M1489.5 666V674M1495.5 638V642M1495.5 649V652M1498.5 634V638M1507.5 637V639M1513.5 618V624M1513.5 629V633M1519.5 620V621M1525.5 613V615M1525.5 620V621M1531.5 625V627M1537.5 628V630M1537.5 635V636M1540.5 628V631M1552.5 607V609M1555.5 588V594M1555.5 598V602M1561.5 597V603M1561.5 607V613M1567.5 597V603M1573.5 600V606M1579.5 619V625M1579.5 633V634M1582.5 607V608M1585.5 588V596M1585.5 603V606M1591.5 588V596M1591.5 600V604M1597.5 593V597M1597.5 602V605M1609.5 581V583M1609.5 587V591M1615.5 598V602M1615.5 607V611M1621.5 613V621M1621.5 625V633M1627.5 632V638M1633.5 619V625M1633.5 629V633M1639.5 597V603M1639.5 607V610M1645.5 599V600M1651.5 598V604M1657.5 565V573M1663.5 551V557M1666.5 543V547M1666.5 553V554M1669.5 548V550M1678.5 546V554M1678.5 558V560M1681.5 540V542M1681.5 550V552M1684.5 563V564M1684.5 569V573M1693.5 562V563M1693.5 572V578M1699.5 556V559M1699.5 562V568M1702.5 545V549M1711.5 551V555M1711.5 559V563M1717.5 548V550M1717.5 554V555M1723.5 545V546M1723.5 553V555M1729.5 545V549M1729.5 560V563M1735.5 533V535M1735.5 548V554M1747.5 545V551M1747.5 555V558M1750.5 536V542M1750.5 548V552M1753.5 529V533M1753.5 537V545M1765.5 540V544M1771.5 524V525M1771.5 536V544M1777.5 523V529M1777.5 536V540M1783.5 500V503M1783.5 510V511M632.5 547V551M632.5 629V633M1702.5 535V539M1702.5 550V554" stroke="#009a00" stroke-width="1" fill="none" shape-rendering="crispEdges"/><path d="M149.5 406.5h2v2h-2zM177.5 374.5h2v10h-2zM182.5 330.5h2v14h-2zM192.5 294.5h2v4h-2zM212.5 314.5h2v6h-2zM222.5 328.5h2v10h-2zM232.5 290.5h2v6h-2zM257.5 240.5h2v4h-2zM273.5 302.5h2v8h-2zM279.5 259.5h2v3h-2zM294.5 239.5h2v6h-2zM308.5 251.5h2v12h-2zM319.5 301.5h2v8h-2zM337.5 268.5h2v4h-2zM357.5 294.5h2v8h-2zM396.5 284.5h2v8h-2zM426.5 222.5h2v10h-2zM463.5 293.5h2v4h-2zM492.5 318.5h2v14h-2zM542.5 523.5h2v10h-2zM546.5 537.5h2v12h-2zM547.5 543.5h2v8h-2zM552.5 552.5h2v6h-2zM562.5 564.5h2v6h-2zM595.5 621.5h2v6h-2zM601.5 626.5h2v6h-2zM619.5 645.5h2v37h-2zM628.5 664.5h2v17h-2zM633.5 568.5h2v6h-2zM673.5 680.5h2v4h-2zM696.5 637.5h2v40h-2zM719.5 620.5h2v40h-2zM739.5 647.5h2v6h-2zM745.5 687.5h2v14h-2zM754.5 655.5h2v18h-2zM756.5 644.5h2v12h-2zM762.5 652.5h2v16h-2zM772.5 660.5h2v28h-2zM775.5 639.5h2v8h-2zM793.5 760.5h2v4h-2zM801.5 747.5h2v10h-2zM814.5 717.5h2v10h-2zM823.5 639.5h2v14h-2zM837.5 603.5h2v10h-2zM873.5 647.5h2v10h-2zM882.5 589.5h2v16h-2zM885.5 599.5h2v10h-2zM891.5 637.5h2v8h-2zM895.5 633.5h2v4h-2zM903.5 638.5h2v8h-2zM925.5 652.5h2v6h-2zM931.5 625.5h2v14h-2zM93.5 510.5h2v3h-2zM107.5 572.5h2v2h-2zM101.5 598.5h2v2h-2zM132.5 487.5h2v1h-2zM946.5 617.5h2v10h-2zM952.5 558.5h2v33h-2zM957.5 534.5h2v10h-2zM977.5 508.5h2v8h-2zM982.5 501.5h2v4h-2zM987.5 485.5h2v5h-2zM1003.5 475.5h2v4h-2zM1007.5 461.5h2v7h-2zM1017.5 473.5h2v7h-2zM1027.5 475.5h2v18h-2zM1036.5 477.5h2v3h-2zM1051.5 481.5h2v6h-2zM1056.5 452.5h2v22h-2zM1066.5 462.5h2v6h-2zM1087.5 473.5h2v5h-2zM1092.5 461.5h2v3h-2zM1097.5 451.5h2v6h-2zM1101.5 447.5h2v3h-2zM1105.5 439.5h2v6h-2zM1122.5 457.5h2v3h-2zM1129.5 462.5h2v3h-2zM1137.5 478.5h2v6h-2zM1141.5 471.5h2v3h-2zM1149.5 454.5h2v6h-2zM1153.5 450.5h2v5h-2zM1157.5 452.5h2v2h-2zM1161.5 445.5h2v6h-2zM1169.5 451.5h2v3h-2zM1184.5 472.5h2v5h-2zM1191.5 472.5h2v2h-2zM1199.5 467.5h2v6h-2zM1207.5 469.5h2v2h-2zM1214.5 466.5h2v3h-2zM1223.5 487.5h2v4h-2zM1230.5 513.5h2v7h-2zM1236.5 555.5h2v2h-2zM1242.5 556.5h2v4h-2zM1248.5 555.5h2v5h-2zM1260.5 560.5h2v7h-2zM1266.5 546.5h2v8h-2zM1272.5 534.5h2v8h-2zM1278.5 527.5h2v3h-2zM1281.5 519.5h2v3h-2zM1284.5 497.5h2v14h-2zM1302.5 545.5h2v4h-2zM1308.5 553.5h2v6h-2zM1314.5 568.5h2v4h-2zM1317.5 557.5h2v6h-2zM1320.5 533.5h2v10h-2zM1326.5 516.5h2v4h-2zM1332.5 519.5h2v3h-2zM1338.5 516.5h2v5h-2zM1344.5 519.5h2v6h-2zM1347.5 524.5h2v3h-2zM1350.5 511.5h2v4h-2zM1353.5 503.5h2v5h-2zM1362.5 487.5h2v10h-2zM1368.5 484.5h2v7h-2zM1374.5 482.5h2v4h-2zM1386.5 518.5h2v5h-2zM1392.5 531.5h2v2h-2zM1398.5 528.5h2v3h-2zM1401.5 523.5h2v4h-2zM1404.5 520.5h2v2h-2zM1416.5 542.5h2v4h-2zM1422.5 542.5h2v2h-2zM1428.5 548.5h2v5h-2zM1446.5 606.5h2v7h-2zM1452.5 622.5h2v3h-2zM1458.5 627.5h2v5h-2zM1470.5 620.5h2v35h-2zM1488.5 655.5h2v10h-2zM1494.5 642.5h2v6h-2zM1497.5 629.5h2v4h-2zM1506.5 628.5h2v8h-2zM1512.5 624.5h2v4h-2zM1518.5 621.5h2v4h-2zM1524.5 615.5h2v4h-2zM1530.5 627.5h2v3h-2zM1536.5 630.5h2v4h-2zM1539.5 623.5h2v4h-2zM1551.5 609.5h2v6h-2zM1554.5 594.5h2v3h-2zM1560.5 603.5h2v3h-2zM1566.5 603.5h2v6h-2zM1572.5 606.5h2v2h-2zM1578.5 625.5h2v7h-2zM1581.5 608.5h2v4h-2zM1584.5 596.5h2v6h-2zM1590.5 596.5h2v3h-2zM1596.5 597.5h2v4h-2zM1602.5 585.5h2v6h-2zM1608.5 583.5h2v3h-2zM1614.5 602.5h2v4h-2zM1620.5 621.5h2v3h-2zM1626.5 628.5h2v3h-2zM1632.5 625.5h2v3h-2zM1638.5 603.5h2v3h-2zM1644.5 600.5h2v10h-2zM1650.5 593.5h2v4h-2zM1656.5 573.5h2v8h-2zM1662.5 557.5h2v4h-2zM1665.5 547.5h2v5h-2zM1668.5 544.5h2v3h-2zM1677.5 554.5h2v3h-2zM1680.5 542.5h2v7h-2zM1683.5 564.5h2v4h-2zM1692.5 563.5h2v8h-2zM1698.5 559.5h2v2h-2zM1701.5 536.5h2v8h-2zM1710.5 555.5h2v3h-2zM1716.5 550.5h2v3h-2zM1722.5 546.5h2v6h-2zM1728.5 549.5h2v10h-2zM1734.5 535.5h2v12h-2zM1740.5 543.5h2v7h-2zM1746.5 551.5h2v3h-2zM1749.5 542.5h2v5h-2zM1752.5 533.5h2v3h-2zM1764.5 544.5h2v5h-2zM1770.5 525.5h2v10h-2zM1776.5 529.5h2v6h-2zM1782.5 503.5h2v6h-2zM631.5 551.5h2v77h-2zM1701.5 539.5h2v10h-2z" stroke="#009a00" stroke-width="1" fill="#fff" shape-rendering="crispEdges"/><path d="M198.5 311V327M242.5 276V283M252.5 283V296M377.5 289V295M515.5 426V432M526.5 476V485M571.5 595V627M574.5 577V620M593.5 583V613M617.5 672V686M688.5 644V661M692.5 661V671M700.5 612V637M710.5 606V637M730.5 624V642M808.5 737V747M819.5 680V701M860.5 608V624M873.5 642V661M918.5 646V661M923.5 666V682M941.5 618V631M963.5 526V540M968.5 530V542M974.5 521V533M993.5 476V499M998.5 491V499M1014.5 463V491M1023.5 476V491M1032.5 459V472M1042.5 479V486M1046.5 474V486M1062.5 441V464M1072.5 456V468M1076.5 449V456M1082.5 454V464M1110.5 425V441M1114.5 437V443M1118.5 447V462M1127.5 455V463M1134.5 464V489M1146.5 459V473M1166.5 437V449M1174.5 445V465M1178.5 462V468M1181.5 466V481M1189.5 472V483M1196.5 464V471M1204.5 465V479M1211.5 468V473M1219.5 471V488M1228.5 495V519M1234.5 523V539M1240.5 559V569M1246.5 550V563M1252.5 552V568M1255.5 553V568M1258.5 559V572M1264.5 543V561M1270.5 540V550M1276.5 520V536M1288.5 484V498M1291.5 504V515M1294.5 533V544M1297.5 546V555M1300.5 550V557M1306.5 541V557M1312.5 553V563M1324.5 522V530M1330.5 510V523M1336.5 511V530M1342.5 518V528M1357.5 492V506M1360.5 488V495M1366.5 484V494M1372.5 478V490M1378.5 475V502M1381.5 498V504M1384.5 507V521M1390.5 516V535M1396.5 523V538M1408.5 511V517M1411.5 528V542M1414.5 546V559M1420.5 532V554M1426.5 543V548M1432.5 546V562M1435.5 560V565M1438.5 560V570M1441.5 596V607M1444.5 591V614M1450.5 603V625M1456.5 622V634M1462.5 627V641M1465.5 650V657M1468.5 670V684M1474.5 630V647M1477.5 647V658M1480.5 661V669M1483.5 664V673M1486.5 668V682M1492.5 642V659M1501.5 613V628M1504.5 620V631M1510.5 632V639M1516.5 611V626M1522.5 618V629M1528.5 619V636M1534.5 623V641M1543.5 620V632M1546.5 626V634M1549.5 628V637M1558.5 591V608M1564.5 587V609M1570.5 599V612M1576.5 612V625M1588.5 590V603M1594.5 591V608M1600.5 586V598M1606.5 581V598M1612.5 581V597M1618.5 610V622M1624.5 628V633M1630.5 628V638M1636.5 608V619M1642.5 596V608M1648.5 583V599M1654.5 589V599M1660.5 571V578M1672.5 539V562M1675.5 561V571M1687.5 560V572M1690.5 561V570M1696.5 558V568M1705.5 544V551M1708.5 549V560M1714.5 547V565M1720.5 544V556M1726.5 538V556M1732.5 549V560M1738.5 543V560M1744.5 541V551M1756.5 527V536M1759.5 532V543M1762.5 547V560M1768.5 529V545M1774.5 519V533M1780.5 512V526M1786.5 498V511M1789.5 507V519" stroke="#f0000c" stroke-width="1" fill="none" shape-rendering="crispEdges"/><path d="M139 457h3v3h-3zM197 314h3v13h-3zM241 278h3v5h-3zM251 285h3v11h-3zM321 292h3v3h-3zM346 282h3v13h-3zM376 292h3v3h-3zM387 340h3v11h-3zM402 242h3v3h-3zM439 250h3v5h-3zM453 243h3v11h-3zM484 342h3v11h-3zM502 366h3v15h-3zM514 429h3v3h-3zM525 480h3v5h-3zM557 554h3v15h-3zM570 597h3v30h-3zM573 579h3v41h-3zM582 555h3v11h-3zM585 558h3v21h-3zM592 586h3v27h-3zM609 639h3v21h-3zM616 675h3v11h-3zM629 645h3v7h-3zM637 593h3v7h-3zM644 647h3v24h-3zM651 661h3v24h-3zM655 678h3v9h-3zM663 724h3v7h-3zM667 743h3v5h-3zM687 647h3v14h-3zM691 664h3v7h-3zM699 614h3v23h-3zM703 612h3v5h-3zM709 609h3v28h-3zM718 625h3v11h-3zM722 609h3v11h-3zM729 626h3v16h-3zM733 660h3v31h-3zM765 660h3v5h-3zM782 671h3v12h-3zM786 700h3v18h-3zM792 747h3v11h-3zM807 740h3v7h-3zM818 683h3v18h-3zM827 620h3v7h-3zM836 600h3v14h-3zM840 595h3v7h-3zM844 571h3v15h-3zM848 562h3v15h-3zM853 563h3v9h-3zM859 610h3v14h-3zM863 644h3v15h-3zM872 644h3v17h-3zM899 646h3v11h-3zM909 622h3v13h-3zM917 648h3v13h-3zM921 654h3v14h-3zM922 668h3v14h-3zM937 612h3v11h-3zM115 617h3v4h-3zM95 546h3v12h-3zM940 622h3v5h-3zM962 532h3v7h-3zM967 533h3v3h-3zM973 522h3v7h-3zM992 484h3v7h-3zM997 493h3v5h-3zM1013 471h3v14h-3zM1022 484h3v5h-3zM1031 462h3v4h-3zM1041 479h3v5h-3zM1045 477h3v8h-3zM1061 443h3v18h-3zM1071 458h3v4h-3zM1075 451h3v4h-3zM1081 456h3v8h-3zM1109 433h3v4h-3zM1113 439h3v4h-3zM1117 447h3v7h-3zM1126 459h3v4h-3zM1133 472h3v9h-3zM1145 465h3v5h-3zM1165 443h3v6h-3zM1173 449h3v13h-3zM1177 464h3v4h-3zM1180 472h3v6h-3zM1188 472h3v7h-3zM1195 466h3v3h-3zM1203 466h3v7h-3zM1210 468h3v4h-3zM1218 479h3v5h-3zM1227 503h3v8h-3zM1233 523h3v15h-3zM1239 560h3v5h-3zM1245 551h3v8h-3zM1251 560h3v4h-3zM1254 559h3v5h-3zM1257 562h3v6h-3zM1263 549h3v4h-3zM1269 542h3v4h-3zM1275 528h3v7h-3zM1287 488h3v9h-3zM1290 506h3v9h-3zM1293 537h3v4h-3zM1296 550h3v3h-3zM1299 551h3v5h-3zM1305 543h3v10h-3zM1311 555h3v6h-3zM1323 524h3v4h-3zM1329 513h3v6h-3zM1335 514h3v8h-3zM1341 520h3v5h-3zM1356 498h3v4h-3zM1359 490h3v5h-3zM1365 487h3v4h-3zM1371 482h3v4h-3zM1377 483h3v15h-3zM1380 500h3v4h-3zM1383 515h3v5h-3zM1389 522h3v9h-3zM1395 529h3v5h-3zM1407 513h3v4h-3zM1410 531h3v3h-3zM1413 547h3v4h-3zM1419 538h3v8h-3zM1425 544h3v4h-3zM1431 554h3v6h-3zM1434 560h3v4h-3zM1437 563h3v5h-3zM1440 599h3v4h-3zM1443 599h3v9h-3zM1449 611h3v10h-3zM1455 624h3v4h-3zM1461 631h3v10h-3zM1464 652h3v4h-3zM1467 674h3v6h-3zM1473 636h3v9h-3zM1476 650h3v8h-3zM1479 665h3v4h-3zM1482 668h3v3h-3zM1485 671h3v3h-3zM1491 648h3v5h-3zM1500 621h3v4h-3zM1503 623h3v5h-3zM1509 633h3v4h-3zM1515 615h3v8h-3zM1521 620h3v6h-3zM1527 620h3v10h-3zM1533 631h3v4h-3zM1542 626h3v4h-3zM1545 626h3v6h-3zM1548 630h3v4h-3zM1557 597h3v7h-3zM1563 593h3v12h-3zM1569 603h3v5h-3zM1575 616h3v8h-3zM1587 596h3v7h-3zM1593 599h3v5h-3zM1599 592h3v6h-3zM1605 587h3v3h-3zM1611 582h3v9h-3zM1617 613h3v9h-3zM1623 629h3v3h-3zM1629 629h3v8h-3zM1635 610h3v6h-3zM1641 597h3v7h-3zM1647 591h3v8h-3zM1653 591h3v5h-3zM1659 571h3v4h-3zM1671 543h3v13h-3zM1674 564h3v6h-3zM1686 562h3v4h-3zM1689 562h3v7h-3zM1695 558h3v8h-3zM1704 545h3v6h-3zM1707 552h3v7h-3zM1713 547h3v10h-3zM1719 544h3v11h-3zM1725 544h3v9h-3zM1731 553h3v3h-3zM1737 546h3v8h-3zM1743 543h3v6h-3zM1755 531h3v5h-3zM1758 536h3v4h-3zM1761 547h3v7h-3zM1767 535h3v4h-3zM1773 522h3v10h-3zM1779 518h3v4h-3zM1785 506h3v5h-3zM1788 511h3v6h-3zM269 291h3v19h-3zM856 558h3v46h-3zM922 667h3v22h-3zM1466 647h3v44h-3zM1553 587h3v14h-3z" fill="#f0000c" shape-rendering="crispEdges"/></g><path d="M94 1008v-2h1v2zM97 1008v-1h1v1zM103 1008v-1h1v1zM109 1008v-2h1v2zM112 1008v-1h1v1zM130 1008v-1h1v1zM135 1008v-1h1v1zM141 1008v-1h1v1zM173 1008v-3h1v3zM176 1008v-1h1v1zM181 1008v-2h1v2zM189 1008v-3h1v3zM190 1008v-2h1v2zM200 1008v-2h1v2zM219 1008v-1h1v1zM223 1008v-1h1v1zM237 1008v-2h1v2zM261 1008v-3h1v3zM272 1008v-1h1v1zM290 1008v-1h1v1zM293 1008v-2h1v2zM317 1008v-3h1v3zM318 1008v-1h1v1zM337 1008v-1h1v1zM347 1008v-2h1v2zM351 1008v-2h1v2zM361 1008v-1h1v1zM371 1008v-1h1v1zM374 1008v-3h1v3zM376 1008v-2h1v2zM390 1008v-2h1v2zM402 1008v-3h1v3zM407 1008v-3h1v3zM409 1008v-2h1v2zM411 1008v-1h1v1zM424 1008v-1h1v1zM429 1008v-2h1v2zM438 1008v-3h1v3zM446 1008v-1h1v1zM450 1008v-1h1v1zM454 1008v-1h1v1zM456 1008v-3h1v3zM457 1008v-1h1v1zM463 1008v-2h1v2zM464 1008v-3h1v3zM471 1008v-3h1v3zM488 1008v-2h1v2zM491 1008v-1h1v1zM492 1008v-1h1v1zM506 1008v-2h1v2zM510 1008v-1h1v1zM513 1008v-1h1v1zM517 1008v-1h1v1zM521 1008v-3h1v3zM526 1008v-3h1v3zM527 1008v-1h1v1zM535 1008v-3h1v3zM540 1008v-2h1v2zM543 1008v-1h1v1zM547 1008v-2h1v2zM553 1008v-2h1v2zM554 1008v-1h1v1zM558 1008v-2h1v2zM570 1008v-1h1v1zM574 1008v-2h1v2zM579 1008v-1h1v1zM585 1008v-1h1v1zM590 1008v-2h1v2zM591 1008v-1h1v1zM603 1008v-1h1v1zM606 1008v-1h1v1zM619 1008v-1h1v1zM621 1008v-2h1v2zM624 1008v-3h1v3zM626 1008v-1h1v1zM632 1008v-2h1v2zM636 1008v-2h1v2zM638 1008v-1h1v1zM642 1008v-2h1v2zM644 1008v-1h1v1zM648 1008v-1h1v1zM654 1008v-2h1v2zM656 1008v-1h1v1zM657 1008v-2h1v2zM662 1008v-1h1v1zM672 1008v-2h1v2zM674 1008v-1h1v1zM676 1008v-1h1v1zM686 1008v-1h1v1zM688 1008v-2h1v2zM692 1008v-3h1v3zM693 1008v-1h1v1zM703 1008v-1h1v1zM710 1008v-1h1v1zM717 1008v-3h1v3zM718 1008v-1h1v1zM727 1008v-2h1v2zM728 1008v-1h1v1zM729 1008v-2h1v2zM736 1008v-3h1v3zM739 1008v-3h1v3zM743 1008v-1h1v1zM744 1008v-1h1v1zM747 1008v-1h1v1zM748 1008v-2h1v2zM750 1008v-1h1v1zM756 1008v-2h1v2zM763 1008v-1h1v1zM764 1008v-1h1v1zM767 1008v-1h1v1zM769 1008v-3h1v3zM771 1008v-2h1v2zM772 1008v-2h1v2zM778 1008v-3h1v3zM782 1008v-3h1v3zM783 1008v-1h1v1zM791 1008v-2h1v2zM795 1008v-1h1v1zM797 1008v-1h1v1zM802 1008v-2h1v2zM805 1008v-2h1v2zM807 1008v-1h1v1zM811 1008v-3h1v3zM813 1008v-2h1v2zM816 1008v-1h1v1zM818 1008v-2h1v2zM821 1008v-1h1v1zM822 1008v-1h1v1zM824 1008v-2h1v2zM825 1008v-2h1v2zM827 1008v-3h1v3zM828 1008v-1h1v1zM832 1008v-2h1v2zM834 1008v-2h1v2zM837 1008v-1h1v1zM839 1008v-1h1v1zM843 1008v-1h1v1zM844 1008v-2h1v2zM845 1008v-2h1v2zM846 1008v-1h1v1zM850 1008v-1h1v1zM858 1008v-1h1v1zM865 1008v-1h1v1zM867 1008v-1h1v1zM871 1008v-2h1v2zM872 1008v-1h1v1zM874 1008v-3h1v3zM878 1008v-3h1v3zM882 1008v-1h1v1zM885 1008v-2h1v2zM886 1008v-1h1v1zM887 1008v-1h1v1zM889 1008v-1h1v1zM891 1008v-1h1v1zM893 1008v-1h1v1zM894 1008v-2h1v2zM898 1008v-1h1v1zM900 1008v-1h1v1zM906 1008v-1h1v1zM908 1008v-2h1v2zM909 1008v-1h1v1zM914 1008v-4h1v4zM920 1008v-1h1v1zM921 1008v-4h1v4zM924 1008v-2h1v2zM925 1008v-5h1v5zM929 1008v-4h1v4zM932 1008v-3h1v3zM933 1008v-4h1v4zM935 1008v-3h1v3zM937 1008v-3h1v3zM938 1008v-1h1v1zM939 1008v-1h1v1zM940 1008v-3h1v3zM949 1008v-3h1v3zM950 1008v-2h1v2zM952 1008v-2h1v2zM953 1008v-2h1v2zM955 1008v-5h1v5zM956 1008v-3h1v3zM957 1008v-3h1v3zM961 1008v-3h1v3zM962 1008v-2h1v2zM963 1008v-3h1v3zM965 1008v-3h1v3zM967 1008v-1h1v1zM968 1008v-4h1v4zM969 1008v-1h1v1zM971 1008v-2h1v2zM972 1008v-1h1v1zM973 1008v-2h1v2zM976 1008v-1h1v1zM979 1008v-1h1v1zM980 1008v-1h1v1zM981 1008v-3h1v3zM982 1008v-4h1v4zM986 1008v-1h1v1zM987 1008v-5h1v5zM989 1008v-2h1v2zM992 1008v-2h1v2zM994 1008v-1h1v1zM995 1008v-4h1v4zM996 1008v-3h1v3zM997 1008v-3h1v3zM999 1008v-4h1v4zM1000 1008v-2h1v2zM1003 1008v-1h1v1zM1004 1008v-3h1v3zM1005 1008v-2h1v2zM1006 1008v-3h1v3zM1007 1008v-1h1v1zM1008 1008v-4h1v4zM1011 1008v-3h1v3zM1013 1008v-3h1v3zM1014 1008v-1h1v1zM1016 1008v-2h1v2zM1018 1008v-3h1v3zM1020 1008v-2h1v2zM1022 1008v-1h1v1zM1025 1008v-3h1v3zM1026 1008v-1h1v1zM1027 1008v-2h1v2zM1028 1008v-3h1v3zM1029 1008v-1h1v1zM1033 1008v-1h1v1zM1036 1008v-2h1v2zM1037 1008v-3h1v3zM1038 1008v-2h1v2zM1039 1008v-3h1v3zM1040 1008v-5h1v5zM1041 1008v-1h1v1zM1044 1008v-2h1v2zM1045 1008v-3h1v3zM1046 1008v-3h1v3zM1048 1008v-2h1v2zM1049 1008v-2h1v2zM1051 1008v-4h1v4zM1054 1008v-1h1v1zM1055 1008v-2h1v2zM1056 1008v-3h1v3zM1059 1008v-1h1v1zM1061 1008v-2h1v2zM1062 1008v-1h1v1zM1065 1008v-3h1v3zM1067 1008v-3h1v3zM1068 1008v-3h1v3zM1069 1008v-1h1v1zM1070 1008v-2h1v2zM1071 1008v-1h1v1zM1074 1008v-2h1v2zM1075 1008v-2h1v2zM1076 1008v-4h1v4zM1077 1008v-3h1v3zM1078 1008v-1h1v1zM1079 1008v-1h1v1zM1080 1008v-2h1v2zM1081 1008v-1h1v1zM1082 1008v-2h1v2zM1083 1008v-3h1v3zM1084 1008v-5h1v5zM1085 1008v-4h1v4zM1086 1008v-3h1v3zM1087 1008v-6h1v6zM1088 1008v-5h1v5zM1089 1008v-5h1v5zM1090 1008v-5h1v5zM1091 1008v-7h1v7zM1092 1008v-6h1v6zM1093 1008v-8h1v8zM1094 1008v-10h1v10zM1095 1008v-7h1v7zM1096 1008v-8h1v8zM1097 1008v-12h1v12zM1098 1008v-10h1v10zM1099 1008v-8h1v8zM1100 1008v-9h1v9zM1101 1008v-6h1v6zM1102 1008v-4h1v4zM1103 1008v-8h1v8zM1104 1008v-4h1v4zM1105 1008v-11h1v11zM1106 1008v-6h1v6zM1107 1008v-5h1v5zM1108 1008v-7h1v7zM1109 1008v-9h1v9zM1110 1008v-9h1v9zM1111 1008v-10h1v10zM1112 1008v-7h1v7zM1113 1008v-9h1v9zM1114 1008v-17h1v17zM1115 1008v-13h1v13zM1116 1008v-11h1v11zM1117 1008v-13h1v13zM1118 1008v-19h1v19zM1119 1008v-20h1v20zM1120 1008v-13h1v13zM1121 1008v-20h1v20zM1122 1008v-17h1v17zM1123 1008v-14h1v14zM1124 1008v-15h1v15zM1125 1008v-24h1v24zM1126 1008v-11h1v11zM1127 1008v-7h1v7zM1128 1008v-9h1v9zM1129 1008v-10h1v10zM1130 1008v-6h1v6zM1131 1008v-6h1v6zM1132 1008v-6h1v6zM1133 1008v-6h1v6zM1134 1008v-4h1v4zM1135 1008v-5h1v5zM1136 1008v-7h1v7zM1137 1008v-9h1v9zM1138 1008v-8h1v8zM1139 1008v-14h1v14zM1140 1008v-5h1v5zM1141 1008v-13h1v13zM1142 1008v-11h1v11zM1143 1008v-20h1v20zM1144 1008v-17h1v17zM1145 1008v-23h1v23zM1146 1008v-22h1v22zM1147 1008v-22h1v22zM1148 1008v-19h1v19zM1149 1008v-25h1v25zM1150 1008v-15h1v15zM1151 1008v-33h1v33zM1152 1008v-21h1v21zM1153 1008v-9h1v9zM1154 1008v-13h1v13zM1155 1008v-23h1v23zM1156 1008v-9h1v9zM1157 1008v-16h1v16zM1158 1008v-19h1v19zM1159 1008v-16h1v16zM1160 1008v-11h1v11zM1161 1008v-11h1v11zM1162 1008v-8h1v8zM1163 1008v-9h1v9zM1164 1008v-13h1v13zM1165 1008v-7h1v7zM1166 1008v-15h1v15zM1167 1008v-16h1v16zM1168 1008v-15h1v15zM1169 1008v-13h1v13zM1170 1008v-28h1v28zM1171 1008v-16h1v16zM1172 1008v-21h1v21zM1173 1008v-23h1v23zM1174 1008v-13h1v13zM1175 1008v-24h1v24zM1176 1008v-20h1v20zM1177 1008v-18h1v18zM1178 1008v-21h1v21zM1179 1008v-13h1v13zM1180 1008v-10h1v10zM1181 1008v-7h1v7zM1182 1008v-9h1v9zM1183 1008v-6h1v6zM1184 1008v-13h1v13zM1185 1008v-6h1v6zM1186 1008v-5h1v5zM1187 1008v-8h1v8zM1188 1008v-10h1v10zM1189 1008v-8h1v8zM1190 1008v-23h1v23zM1191 1008v-24h1v24zM1192 1008v-24h1v24zM1193 1008v-13h1v13zM1194 1008v-12h1v12zM1195 1008v-25h1v25zM1196 1008v-11h1v11zM1197 1008v-29h1v29zM1198 1008v-27h1v27zM1199 1008v-28h1v28zM1200 1008v-17h1v17zM1201 1008v-20h1v20zM1202 1008v-15h1v15zM1203 1008v-8h1v8zM1204 1008v-10h1v10zM1205 1008v-11h1v11zM1206 1008v-13h1v13zM1207 1008v-9h1v9zM1208 1008v-8h1v8zM1209 1008v-12h1v12zM1210 1008v-7h1v7zM1211 1008v-4h1v4zM1212 1008v-9h1v9zM1213 1008v-6h1v6zM1214 1008v-10h1v10zM1215 1008v-7h1v7zM1216 1008v-7h1v7zM1217 1008v-7h1v7zM1218 1008v-13h1v13zM1219 1008v-12h1v12zM1220 1008v-14h1v14zM1221 1008v-8h1v8zM1222 1008v-13h1v13zM1223 1008v-12h1v12zM1224 1008v-21h1v21zM1225 1008v-31h1v31zM1226 1008v-29h1v29zM1227 1008v-45h1v45zM1228 1008v-34h1v34zM1229 1008v-41h1v41zM1230 1008v-49h1v49zM1231 1008v-41h1v41zM1232 1008v-32h1v32zM1233 1008v-102h1v102zM1234 1008v-52h1v52zM1235 1008v-30h1v30zM1236 1008v-60h1v60zM1237 1008v-37h1v37zM1238 1008v-69h1v69zM1239 1008v-30h1v30zM1240 1008v-32h1v32zM1241 1008v-29h1v29zM1242 1008v-17h1v17zM1243 1008v-25h1v25zM1244 1008v-18h1v18zM1245 1008v-20h1v20zM1246 1008v-6h1v6zM1247 1008v-9h1v9zM1248 1008v-6h1v6zM1249 1008v-9h1v9zM1250 1008v-12h1v12zM1251 1008v-16h1v16zM1252 1008v-19h1v19zM1253 1008v-21h1v21zM1254 1008v-12h1v12zM1255 1008v-16h1v16zM1256 1008v-23h1v23zM1257 1008v-29h1v29zM1258 1008v-34h1v34zM1259 1008v-27h1v27zM1260 1008v-20h1v20zM1261 1008v-33h1v33zM1262 1008v-27h1v27zM1263 1008v-21h1v21zM1264 1008v-25h1v25zM1265 1008v-16h1v16zM1266 1008v-17h1v17zM1267 1008v-16h1v16zM1268 1008v-6h1v6zM1269 1008v-11h1v11zM1270 1008v-7h1v7zM1271 1008v-9h1v9zM1272 1008v-9h1v9zM1273 1008v-12h1v12zM1274 1008v-14h1v14zM1275 1008v-11h1v11zM1276 1008v-25h1v25zM1277 1008v-13h1v13zM1278 1008v-11h1v11zM1279 1008v-31h1v31zM1280 1008v-21h1v21zM1281 1008v-22h1v22zM1282 1008v-34h1v34zM1283 1008v-32h1v32zM1284 1008v-26h1v26zM1285 1008v-18h1v18zM1286 1008v-24h1v24zM1287 1008v-46h1v46zM1288 1008v-32h1v32zM1289 1008v-31h1v31zM1290 1008v-38h1v38zM1291 1008v-37h1v37zM1292 1008v-22h1v22zM1293 1008v-19h1v19zM1294 1008v-33h1v33zM1295 1008v-32h1v32zM1296 1008v-56h1v56zM1297 1008v-25h1v25zM1298 1008v-24h1v24zM1299 1008v-18h1v18zM1300 1008v-7h1v7zM1301 1008v-10h1v10zM1302 1008v-11h1v11zM1303 1008v-9h1v9zM1304 1008v-3h1v3zM1305 1008v-6h1v6zM1306 1008v-8h1v8zM1307 1008v-14h1v14zM1308 1008v-10h1v10zM1309 1008v-10h1v10zM1310 1008v-10h1v10zM1311 1008v-25h1v25zM1312 1008v-20h1v20zM1313 1008v-25h1v25zM1314 1008v-20h1v20zM1315 1008v-14h1v14zM1316 1008v-44h1v44zM1317 1008v-22h1v22zM1318 1008v-20h1v20zM1319 1008v-17h1v17zM1320 1008v-21h1v21zM1321 1008v-12h1v12zM1322 1008v-20h1v20zM1323 1008v-40h1v40zM1324 1008v-23h1v23zM1325 1008v-9h1v9zM1326 1008v-18h1v18zM1327 1008v-9h1v9zM1328 1008v-7h1v7zM1329 1008v-7h1v7zM1330 1008v-12h1v12zM1331 1008v-8h1v8zM1332 1008v-4h1v4zM1333 1008v-8h1v8zM1334 1008v-7h1v7zM1335 1008v-6h1v6zM1336 1008v-5h1v5zM1337 1008v-8h1v8zM1338 1008v-5h1v5zM1339 1008v-12h1v12zM1340 1008v-23h1v23zM1341 1008v-13h1v13zM1342 1008v-13h1v13zM1343 1008v-17h1v17zM1344 1008v-19h1v19zM1345 1008v-25h1v25zM1346 1008v-68h1v68zM1347 1008v-17h1v17zM1348 1008v-32h1v32zM1349 1008v-27h1v27zM1350 1008v-28h1v28zM1351 1008v-15h1v15zM1352 1008v-25h1v25zM1353 1008v-27h1v27zM1354 1008v-16h1v16zM1355 1008v-19h1v19zM1356 1008v-9h1v9zM1357 1008v-27h1v27zM1358 1008v-8h1v8zM1359 1008v-7h1v7zM1360 1008v-6h1v6zM1361 1008v-7h1v7zM1362 1008v-7h1v7zM1363 1008v-7h1v7zM1364 1008v-5h1v5zM1365 1008v-4h1v4zM1366 1008v-7h1v7zM1367 1008v-5h1v5zM1368 1008v-11h1v11zM1369 1008v-10h1v10zM1370 1008v-13h1v13zM1371 1008v-13h1v13zM1372 1008v-20h1v20zM1373 1008v-23h1v23zM1374 1008v-31h1v31zM1375 1008v-25h1v25zM1376 1008v-20h1v20zM1377 1008v-30h1v30zM1378 1008v-17h1v17zM1379 1008v-18h1v18zM1380 1008v-26h1v26zM1381 1008v-15h1v15zM1382 1008v-25h1v25zM1383 1008v-15h1v15zM1384 1008v-16h1v16zM1385 1008v-8h1v8zM1386 1008v-12h1v12zM1387 1008v-14h1v14zM1388 1008v-11h1v11zM1389 1008v-8h1v8zM1390 1008v-7h1v7zM1391 1008v-7h1v7zM1392 1008v-3h1v3zM1393 1008v-4h1v4zM1394 1008v-4h1v4zM1395 1008v-6h1v6zM1396 1008v-5h1v5zM1397 1008v-8h1v8zM1398 1008v-15h1v15zM1399 1008v-17h1v17zM1400 1008v-10h1v10zM1401 1008v-13h1v13zM1402 1008v-24h1v24zM1403 1008v-12h1v12zM1404 1008v-33h1v33zM1405 1008v-42h1v42zM1406 1008v-38h1v38zM1407 1008v-37h1v37zM1408 1008v-26h1v26zM1409 1008v-38h1v38zM1410 1008v-38h1v38zM1411 1008v-40h1v40zM1412 1008v-33h1v33zM1413 1008v-35h1v35zM1414 1008v-14h1v14zM1415 1008v-17h1v17zM1416 1008v-16h1v16zM1417 1008v-16h1v16zM1418 1008v-9h1v9zM1419 1008v-11h1v11zM1420 1008v-19h1v19zM1421 1008v-9h1v9zM1422 1008v-4h1v4zM1423 1008v-4h1v4zM1424 1008v-5h1v5zM1425 1008v-10h1v10zM1426 1008v-9h1v9zM1427 1008v-8h1v8zM1428 1008v-9h1v9zM1429 1008v-12h1v12zM1430 1008v-30h1v30zM1431 1008v-29h1v29zM1432 1008v-20h1v20zM1433 1008v-42h1v42zM1434 1008v-44h1v44zM1435 1008v-40h1v40zM1436 1008v-45h1v45zM1437 1008v-43h1v43zM1438 1008v-47h1v47zM1439 1008v-39h1v39zM1440 1008v-21h1v21zM1441 1008v-20h1v20zM1442 1008v-12h1v12zM1443 1008v-8h1v8zM1444 1008v-13h1v13zM1445 1008v-9h1v9zM1446 1008v-8h1v8zM1447 1008v-5h1v5zM1448 1008v-9h1v9zM1449 1008v-6h1v6zM1450 1008v-29h1v29zM1451 1008v-15h1v15zM1452 1008v-14h1v14zM1453 1008v-6h1v6zM1454 1008v-9h1v9zM1455 1008v-4h1v4zM1456 1008v-12h1v12zM1457 1008v-9h1v9zM1458 1008v-22h1v22zM1459 1008v-13h1v13zM1460 1008v-20h1v20zM1461 1008v-30h1v30zM1462 1008v-34h1v34zM1463 1008v-27h1v27zM1464 1008v-39h1v39zM1465 1008v-31h1v31zM1466 1008v-41h1v41zM1467 1008v-34h1v34zM1468 1008v-81h1v81zM1469 1008v-76h1v76zM1470 1008v-70h1v70zM1471 1008v-57h1v57zM1472 1008v-48h1v48zM1473 1008v-37h1v37zM1474 1008v-45h1v45zM1475 1008v-27h1v27zM1476 1008v-16h1v16zM1477 1008v-13h1v13zM1478 1008v-14h1v14zM1479 1008v-12h1v12zM1480 1008v-17h1v17zM1481 1008v-6h1v6zM1482 1008v-5h1v5zM1483 1008v-8h1v8zM1484 1008v-8h1v8zM1485 1008v-12h1v12zM1486 1008v-19h1v19zM1487 1008v-10h1v10zM1488 1008v-20h1v20zM1489 1008v-44h1v44zM1490 1008v-38h1v38zM1491 1008v-36h1v36zM1492 1008v-37h1v37zM1493 1008v-41h1v41zM1494 1008v-31h1v31zM1495 1008v-31h1v31zM1496 1008v-23h1v23zM1497 1008v-27h1v27zM1498 1008v-37h1v37zM1499 1008v-44h1v44zM1500 1008v-17h1v17zM1501 1008v-19h1v19zM1502 1008v-10h1v10zM1503 1008v-8h1v8zM1504 1008v-13h1v13zM1505 1008v-6h1v6zM1506 1008v-5h1v5zM1507 1008v-8h1v8zM1508 1008v-8h1v8zM1509 1008v-4h1v4zM1510 1008v-4h1v4zM1511 1008v-5h1v5zM1512 1008v-6h1v6zM1513 1008v-4h1v4zM1514 1008v-8h1v8zM1515 1008v-7h1v7zM1516 1008v-9h1v9zM1517 1008v-11h1v11zM1518 1008v-15h1v15zM1519 1008v-13h1v13zM1520 1008v-11h1v11zM1521 1008v-10h1v10zM1522 1008v-25h1v25zM1523 1008v-21h1v21zM1524 1008v-22h1v22zM1525 1008v-15h1v15zM1526 1008v-20h1v20zM1527 1008v-18h1v18zM1528 1008v-19h1v19zM1529 1008v-12h1v12zM1530 1008v-14h1v14zM1531 1008v-12h1v12zM1532 1008v-12h1v12zM1533 1008v-8h1v8zM1534 1008v-9h1v9zM1535 1008v-6h1v6zM1536 1008v-9h1v9zM1537 1008v-6h1v6zM1538 1008v-5h1v5zM1539 1008v-3h1v3zM1540 1008v-8h1v8zM1541 1008v-4h1v4zM1542 1008v-2h1v2zM1543 1008v-4h1v4zM1544 1008v-5h1v5zM1545 1008v-9h1v9zM1546 1008v-11h1v11zM1547 1008v-6h1v6zM1548 1008v-14h1v14zM1549 1008v-8h1v8zM1550 1008v-23h1v23zM1551 1008v-12h1v12zM1552 1008v-33h1v33zM1553 1008v-31h1v31zM1554 1008v-32h1v32zM1555 1008v-27h1v27zM1556 1008v-17h1v17zM1557 1008v-27h1v27zM1558 1008v-14h1v14zM1559 1008v-22h1v22zM1560 1008v-16h1v16zM1561 1008v-19h1v19zM1562 1008v-16h1v16zM1563 1008v-11h1v11zM1564 1008v-9h1v9zM1565 1008v-8h1v8zM1566 1008v-8h1v8zM1567 1008v-9h1v9zM1568 1008v-8h1v8zM1569 1008v-16h1v16zM1570 1008v-15h1v15zM1571 1008v-15h1v15zM1572 1008v-23h1v23zM1573 1008v-26h1v26zM1574 1008v-27h1v27zM1575 1008v-16h1v16zM1576 1008v-27h1v27zM1577 1008v-37h1v37zM1578 1008v-34h1v34zM1579 1008v-25h1v25zM1580 1008v-32h1v32zM1581 1008v-33h1v33zM1582 1008v-39h1v39zM1583 1008v-40h1v40zM1584 1008v-26h1v26zM1585 1008v-23h1v23zM1586 1008v-19h1v19zM1587 1008v-14h1v14zM1588 1008v-11h1v11zM1589 1008v-17h1v17zM1590 1008v-11h1v11zM1591 1008v-14h1v14zM1592 1008v-7h1v7zM1593 1008v-8h1v8zM1594 1008v-6h1v6zM1595 1008v-4h1v4zM1596 1008v-7h1v7zM1597 1008v-7h1v7zM1598 1008v-5h1v5zM1599 1008v-4h1v4zM1600 1008v-7h1v7zM1601 1008v-8h1v8zM1602 1008v-10h1v10zM1603 1008v-9h1v9zM1604 1008v-10h1v10zM1605 1008v-8h1v8zM1606 1008v-12h1v12zM1607 1008v-21h1v21zM1608 1008v-16h1v16zM1609 1008v-21h1v21zM1610 1008v-21h1v21zM1611 1008v-17h1v17zM1612 1008v-12h1v12zM1613 1008v-25h1v25zM1614 1008v-15h1v15zM1615 1008v-22h1v22zM1616 1008v-27h1v27zM1617 1008v-29h1v29zM1618 1008v-13h1v13zM1619 1008v-24h1v24zM1620 1008v-14h1v14zM1621 1008v-11h1v11zM1622 1008v-18h1v18zM1623 1008v-14h1v14zM1624 1008v-14h1v14zM1625 1008v-6h1v6zM1626 1008v-5h1v5zM1627 1008v-7h1v7zM1628 1008v-6h1v6zM1629 1008v-7h1v7zM1630 1008v-3h1v3zM1631 1008v-4h1v4zM1632 1008v-4h1v4zM1633 1008v-7h1v7zM1634 1008v-10h1v10zM1635 1008v-11h1v11zM1636 1008v-30h1v30zM1637 1008v-30h1v30zM1638 1008v-22h1v22zM1639 1008v-27h1v27zM1640 1008v-26h1v26zM1641 1008v-39h1v39zM1642 1008v-37h1v37zM1643 1008v-20h1v20zM1644 1008v-20h1v20zM1645 1008v-34h1v34zM1646 1008v-28h1v28zM1647 1008v-25h1v25zM1648 1008v-19h1v19zM1649 1008v-13h1v13zM1650 1008v-9h1v9zM1651 1008v-15h1v15zM1652 1008v-11h1v11zM1653 1008v-5h1v5zM1654 1008v-7h1v7zM1655 1008v-4h1v4zM1656 1008v-6h1v6zM1657 1008v-5h1v5zM1658 1008v-4h1v4zM1659 1008v-6h1v6zM1660 1008v-13h1v13zM1661 1008v-15h1v15zM1662 1008v-12h1v12zM1663 1008v-13h1v13zM1664 1008v-19h1v19zM1665 1008v-12h1v12zM1666 1008v-30h1v30zM1667 1008v-18h1v18zM1668 1008v-15h1v15zM1669 1008v-22h1v22zM1670 1008v-21h1v21zM1671 1008v-25h1v25zM1672 1008v-18h1v18zM1673 1008v-34h1v34zM1674 1008v-16h1v16zM1675 1008v-23h1v23zM1676 1008v-20h1v20zM1677 1008v-11h1v11zM1678 1008v-9h1v9zM1679 1008v-16h1v16zM1680 1008v-7h1v7zM1681 1008v-14h1v14zM1682 1008v-6h1v6zM1683 1008v-11h1v11zM1684 1008v-9h1v9zM1685 1008v-8h1v8zM1686 1008v-6h1v6zM1687 1008v-6h1v6zM1688 1008v-8h1v8zM1689 1008v-5h1v5zM1690 1008v-4h1v4zM1691 1008v-4h1v4zM1692 1008v-4h1v4zM1693 1008v-14h1v14zM1694 1008v-17h1v17zM1695 1008v-13h1v13zM1696 1008v-20h1v20zM1697 1008v-17h1v17zM1698 1008v-16h1v16zM1699 1008v-20h1v20zM1700 1008v-19h1v19zM1701 1008v-17h1v17zM1702 1008v-35h1v35zM1703 1008v-23h1v23zM1704 1008v-29h1v29zM1705 1008v-26h1v26zM1706 1008v-13h1v13zM1707 1008v-11h1v11zM1708 1008v-11h1v11zM1709 1008v-9h1v9zM1710 1008v-8h1v8zM1711 1008v-10h1v10zM1712 1008v-4h1v4zM1713 1008v-6h1v6zM1714 1008v-4h1v4zM1715 1008v-4h1v4zM1716 1008v-2h1v2zM1717 1008v-2h1v2zM1718 1008v-4h1v4zM1719 1008v-8h1v8zM1720 1008v-9h1v9zM1721 1008v-11h1v11zM1722 1008v-8h1v8zM1723 1008v-11h1v11zM1724 1008v-9h1v9zM1725 1008v-14h1v14zM1726 1008v-21h1v21zM1727 1008v-19h1v19zM1728 1008v-14h1v14zM1729 1008v-38h1v38zM1730 1008v-21h1v21zM1731 1008v-22h1v22zM1732 1008v-19h1v19zM1733 1008v-28h1v28zM1734 1008v-20h1v20zM1735 1008v-32h1v32zM1736 1008v-29h1v29zM1737 1008v-25h1v25zM1738 1008v-35h1v35zM1739 1008v-28h1v28zM1740 1008v-17h1v17zM1741 1008v-20h1v20zM1742 1008v-12h1v12zM1743 1008v-13h1v13zM1744 1008v-7h1v7zM1745 1008v-8h1v8zM1746 1008v-7h1v7zM1747 1008v-3h1v3zM1748 1008v-3h1v3zM1749 1008v-8h1v8zM1750 1008v-4h1v4zM1751 1008v-4h1v4zM1752 1008v-8h1v8zM1753 1008v-21h1v21zM1754 1008v-9h1v9zM1755 1008v-7h1v7zM1756 1008v-11h1v11zM1757 1008v-14h1v14zM1758 1008v-9h1v9zM1759 1008v-19h1v19zM1760 1008v-15h1v15zM1761 1008v-20h1v20zM1762 1008v-16h1v16zM1763 1008v-14h1v14zM1764 1008v-17h1v17zM1765 1008v-15h1v15zM1766 1008v-16h1v16zM1767 1008v-16h1v16zM1768 1008v-13h1v13zM1769 1008v-17h1v17zM1770 1008v-20h1v20zM1771 1008v-8h1v8zM1772 1008v-21h1v21zM1773 1008v-12h1v12zM1774 1008v-7h1v7zM1775 1008v-5h1v5zM1776 1008v-8h1v8zM1777 1008v-6h1v6zM1778 1008v-2h1v2zM1779 1008v-9h1v9zM1780 1008v-16h1v16zM1781 1008v-10h1v10zM1782 1008v-36h1v36zM1783 1008v-28h1v28zM1784 1008v-41h1v41zM1785 1008v-45h1v45zM1786 1008v-36h1v36zM1787 1008v-48h1v48zM1788 1008v-52h1v52zM1078 1008v-18h1v18zM1093 1008v-29h1v29zM1098 1008v-63h1v63zM1113 1008v-52h1v52zM1116 1008v-100h1v100zM1117 1008v-62h1v62zM1124 1008v-34h1v34zM1125 1008v-30h1v30zM1142 1008v-74h1v74zM1147 1008v-42h1v42zM1150 1008v-143h1v143zM1151 1008v-60h1v60zM1171 1008v-84h1v84zM1177 1008v-43h1v43zM1198 1008v-34h1v34zM1227 1008v-89h1v89zM1228 1008v-70h1v70zM1230 1008v-87h1v87zM1231 1008v-66h1v66zM1235 1008v-73h1v73zM1237 1008v-74h1v74zM1260 1008v-44h1v44zM1273 1008v-52h1v52zM1283 1008v-65h1v65zM1285 1008v-58h1v58zM1290 1008v-70h1v70zM1293 1008v-50h1v50zM1317 1008v-59h1v59zM1315 1008v-40h1v40zM1327 1008v-47h1v47zM1344 1008v-48h1v48zM1354 1008v-60h1v60zM1377 1008v-63h1v63zM1380 1008v-45h1v45zM1407 1008v-52h1v52zM1411 1008v-56h1v56zM1430 1008v-56h1v56zM1439 1008v-117h1v117zM1440 1008v-50h1v50zM1450 1008v-62h1v62zM1464 1008v-83h1v83zM1465 1008v-70h1v70zM1469 1008v-165h1v165zM1470 1008v-122h1v122zM1472 1008v-185h1v185zM1473 1008v-73h1v73zM1492 1008v-84h1v84zM1493 1008v-50h1v50zM1497 1008v-70h1v70zM1516 1008v-42h1v42zM1523 1008v-40h1v40zM1526 1008v-42h1v42zM1553 1008v-87h1v87zM1554 1008v-45h1v45zM1574 1008v-58h1v58zM1578 1008v-62h1v62zM1582 1008v-74h1v74zM1583 1008v-45h1v45zM1616 1008v-65h1v65zM1618 1008v-38h1v38zM1638 1008v-86h1v86zM1639 1008v-44h1v44zM1660 1008v-54h1v54zM1666 1008v-54h1v54zM1673 1008v-74h1v74zM1674 1008v-42h1v42zM1702 1008v-65h1v65zM1703 1008v-38h1v38zM1727 1008v-48h1v48zM1734 1008v-77h1v77zM1735 1008v-45h1v45zM1772 1008v-72h1v72zM1782 1008v-41h1v41zM1788 1008v-49h1v49z" fill="#0000d4" shape-rendering="crispEdges"/><polyline points="85,1004 700,1003.5 900,1002 1000,1000 1040,997.7 1075,997.5 1078.5,996 1090,995 1093,991 1108.7,989 1112,986 1113,975 1117,965 1125.4,955 1138,949 1146,945 1150.4,930 1159,922 1160.8,903 1175.4,901 1178.5,892 1182.7,886 1194,879 1201.5,872 1209.8,866.5 1226.5,861 1230.6,847 1238,843.5 1257.7,844 1262,848 1290,848.5 1294,846.5 1317,844 1346,843.5 1348,846 1377.5,845 1406.7,843.5 1413,841.5 1427.5,839.5 1431.7,842 1440,841.5 1464,840.5 1466,843 1480,838.5 1495,840 1525,842 1555,839.5 1559.6,838 1574,838 1576.7,841.5 1586.7,838 1601,837 1609.6,834.5 1622,832 1638.8,832 1642,834 1659.6,830.5 1695,831 1705.4,827.5 1726,825.5 1729.4,823.5 1757.5,823.5 1766,825 1783.5,822.5 1788.8,825" fill="none" stroke="#f0a818" stroke-width="1.400"/><path d="M47.5 205.5H1842.5V792.5H47.5z M47.5 808.5H1842.5V1007.5H47.5z" fill="none" stroke="#484848" stroke-width="1" shape-rendering="crispEdges"/><path d="M1843 288.5h3" stroke="#484848" shape-rendering="crispEdges"/><text x="1848" y="292" font-size="10" textLength="44.5" lengthAdjust="spacingAndGlyphs">2 300,0000</text><path d="M1843 382.5h3" stroke="#484848" shape-rendering="crispEdges"/><text x="1848" y="386" font-size="10" textLength="44.5" lengthAdjust="spacingAndGlyphs">2 250,0000</text><path d="M1843 479.5h3" stroke="#484848" shape-rendering="crispEdges"/><text x="1848" y="483" font-size="10" textLength="44.5" lengthAdjust="spacingAndGlyphs">2 200,0000</text><path d="M1843 578.5h3" stroke="#484848" shape-rendering="crispEdges"/><text x="1848" y="582" font-size="10" textLength="44.5" lengthAdjust="spacingAndGlyphs">2 150,0000</text><path d="M1843 680.5h3" stroke="#484848" shape-rendering="crispEdges"/><text x="1848" y="684" font-size="10" textLength="44.5" lengthAdjust="spacingAndGlyphs">2 100,0000</text><path d="M1843 783.5h3" stroke="#484848" shape-rendering="crispEdges"/><text x="1848" y="787" font-size="10" textLength="44.5" lengthAdjust="spacingAndGlyphs">2 050,0000</text><text x="87" y="804" font-size="10" text-anchor="middle" textLength="44.5" lengthAdjust="spacingAndGlyphs">21.05.2019</text><text x="148" y="804" font-size="10" text-anchor="middle" textLength="44.5" lengthAdjust="spacingAndGlyphs">07.06.2019</text><text x="220" y="804" font-size="10" text-anchor="middle" textLength="44.5" lengthAdjust="spacingAndGlyphs">26.06.2019</text><text x="360" y="804" font-size="10" text-anchor="middle" textLength="44.5" lengthAdjust="spacingAndGlyphs">15.07.2019</text><text x="495" y="804" font-size="10" text-anchor="middle" textLength="44.5" lengthAdjust="spacingAndGlyphs">01.08.2019</text><text x="688" y="804" font-size="10" text-anchor="middle" textLength="44.5" lengthAdjust="spacingAndGlyphs">20.08.2019</text><text x="927" y="804" font-size="10" text-anchor="middle" textLength="44.5" lengthAdjust="spacingAndGlyphs">06.09.2019</text><text x="1290" y="804" font-size="10" text-anchor="middle" textLength="44.5" lengthAdjust="spacingAndGlyphs">25.09.2019</text><text x="1672" y="804" font-size="10" text-anchor="middle" textLength="44.5" lengthAdjust="spacingAndGlyphs">14.10.2019</text><path d="M1843 842.5h3" stroke="#484848" shape-rendering="crispEdges"/><text x="1848" y="846" font-size="10" textLength="22.3" lengthAdjust="spacingAndGlyphs">2 500</text><path d="M1843 875.5h3" stroke="#484848" shape-rendering="crispEdges"/><text x="1848" y="879" font-size="10" textLength="22.3" lengthAdjust="spacingAndGlyphs">2 000</text><path d="M1843 908.5h3" stroke="#484848" shape-rendering="crispEdges"/><text x="1848" y="912" font-size="10" textLength="22.3" lengthAdjust="spacingAndGlyphs">1 500</text><path d="M1843 941.5h3" stroke="#484848" shape-rendering="crispEdges"/><text x="1848" y="945" font-size="10" textLength="22.3" lengthAdjust="spacingAndGlyphs">1 000</text><path d="M1843 974.5h3" stroke="#484848" shape-rendering="crispEdges"/><text x="1848" y="978" font-size="10" textLength="14.9" lengthAdjust="spacingAndGlyphs">500</text><path d="M44 828.5h3" stroke="#484848" shape-rendering="crispEdges"/><text x="43" y="832" font-size="10" text-anchor="end" textLength="26.3" lengthAdjust="spacingAndGlyphs">50 000</text><path d="M44 863.5h3" stroke="#484848" shape-rendering="crispEdges"/><text x="43" y="867" font-size="10" text-anchor="end" textLength="26.3" lengthAdjust="spacingAndGlyphs">40 000</text><path d="M44 898.5h3" stroke="#484848" shape-rendering="crispEdges"/><text x="43" y="902" font-size="10" text-anchor="end" textLength="26.3" lengthAdjust="spacingAndGlyphs">30 000</text><path d="M44 934.5h3" stroke="#484848" shape-rendering="crispEdges"/><text x="43" y="938" font-size="10" text-anchor="end" textLength="26.3" lengthAdjust="spacingAndGlyphs">20 000</text><path d="M44 969.5h3" stroke="#484848" shape-rendering="crispEdges"/><text x="43" y="973" font-size="10" text-anchor="end" textLength="26.3" lengthAdjust="spacingAndGlyphs">10 000</text><path d="M44 1004.5h3" stroke="#484848" shape-rendering="crispEdges"/><text x="43" y="1008" font-size="10" text-anchor="end" textLength="4.8" lengthAdjust="spacingAndGlyphs">0</text><rect x="47.500" y="205.500" width="461" height="14" fill="#fcf4c4" stroke="#585858" stroke-width="1" shape-rendering="crispEdges"/><text x="52" y="216" font-size="10" xml:space="preserve" style="white-space:pre" textLength="454">FW20Z1920 [Otw.: 2 180,0000  Max.: 2 180,0000  Min.: 2 180,0000  Zamk.: 2 180,0000] (0,00%)</text><rect x="47.500" y="808.500" width="182" height="14" fill="#fcf4c4" stroke="#585858" stroke-width="1" shape-rendering="crispEdges"/><text x="52" y="820" font-size="10" textLength="175">Otwarte Pozycje, VOL - Volume [147]</text><polyline points="257,221 793,778" fill="none" stroke="#4040f5" stroke-width="1.6" stroke-linecap="round" stroke-linejoin="round"/><polyline points="793,778 1106,431.5 1782,290.5" fill="none" stroke="#4040f5" stroke-width="1.6" stroke-linecap="round" stroke-linejoin="round"/><polyline points="284,225 1107,423.5 1473,714" fill="none" stroke="#4040f5" stroke-width="1.6" stroke-linecap="round" stroke-linejoin="round"/><polyline points="1473,714 1782,290.5" fill="none" stroke="#4040f5" stroke-width="1.6" stroke-linecap="round" stroke-linejoin="round"/><polyline points="263,212 381.6,352.6 450.5,226.8 666.6,744 707.5,607.5 792.7,777.6" fill="none" stroke="#ff0000" stroke-width="1.6" stroke-linecap="round" stroke-linejoin="round"/><polyline points="796.2,783.4 1826.7,682.2" fill="none" stroke="#ff0000" stroke-width="1.6" stroke-linecap="round" stroke-linejoin="round"/><polyline points="1099.5,424.5 1827,427.5" fill="none" stroke="#ff0000" stroke-width="1.6" stroke-linecap="round" stroke-linejoin="round"/><polyline points="1113.8,480 1427.8,478.7" fill="none" stroke="#ff0000" stroke-width="1.6" stroke-linecap="round" stroke-linejoin="round"/><polyline points="1162.5,442.5 1244.5,577 1372.2,480 1472.6,720.4" fill="none" stroke="#ff0000" stroke-width="1.6" stroke-linecap="round" stroke-linejoin="round"/><polyline points="1603,577 1853.3,575.5" fill="none" stroke="#ff0000" stroke-width="1.6" stroke-linecap="round" stroke-linejoin="round"/><polyline points="1670,498 1794,498.3" fill="none" stroke="#ff0000" stroke-width="1.6" stroke-linecap="round" stroke-linejoin="round"/><polyline points="1608,580 1631,635" fill="none" stroke="#ff0000" stroke-width="1.6" stroke-linecap="round" stroke-linejoin="round"/><polyline points="1756,289.2 1827,288.5" fill="none" stroke="#ff0000" stroke-width="1.6" stroke-linecap="round" stroke-linejoin="round"/><polyline points="1113,427.8 1607.5,583" fill="none" stroke="#ff0000" stroke-width="2.7" stroke-linecap="round" stroke-linejoin="round"/><polyline points="1474,715 1608,581 1788,498" fill="none" stroke="#ff0000" stroke-width="3.3" stroke-linecap="round" stroke-linejoin="round"/><polyline points="1632,635 1788,498" fill="none" stroke="#ff0000" stroke-width="3.3" stroke-linecap="round" stroke-linejoin="round"/><polyline points="358.5,380 372.7,357.8 365.7,397.6" fill="none" stroke="#ff0000" stroke-width="1.6" stroke-linecap="round" stroke-linejoin="round"/><polyline points="341.4,397 365.7,397.6" fill="none" stroke="#ff0000" stroke-width="1.6" stroke-linecap="round" stroke-linejoin="round"/><polyline points="448,218 465.1,219.2" fill="none" stroke="#ff0000" stroke-width="1.6" stroke-linecap="round" stroke-linejoin="round"/><polyline points="463.8,223 455.2,230.6 467.6,233.5" fill="none" stroke="#ff0000" stroke-width="1.6" stroke-linecap="round" stroke-linejoin="round"/><polyline points="648,745.2 668.2,748.7 653.1,756.8 668.2,761.4 654.3,774.8" fill="none" stroke="#ff0000" stroke-width="1.6" stroke-linecap="round" stroke-linejoin="round"/><polyline points="709.2,574.4 674.4,595.9" fill="none" stroke="#ff0000" stroke-width="1.6" stroke-linecap="round" stroke-linejoin="round"/><polyline points="680.9,593.6 709.9,590.6 699.4,608.6" fill="none" stroke="#ff0000" stroke-width="1.6" stroke-linecap="round" stroke-linejoin="round"/><polyline points="811.7,774.1 808.2,785.7" fill="none" stroke="#ff0000" stroke-width="1.6" stroke-linecap="round" stroke-linejoin="round"/><polyline points="808.2,783.4 826.8,783.4 819.8,802.6" fill="none" stroke="#ff0000" stroke-width="1.6" stroke-linecap="round" stroke-linejoin="round"/><polyline points="808.2,795 823.3,795" fill="none" stroke="#ff0000" stroke-width="1.6" stroke-linecap="round" stroke-linejoin="round"/><polyline points="840.4,542.7 853.3,521.1 862.7,549.3" fill="none" stroke="#ff0000" stroke-width="1.6" stroke-linecap="round" stroke-linejoin="round"/><polyline points="838.2,530.7 864,536" fill="none" stroke="#ff0000" stroke-width="1.6" stroke-linecap="round" stroke-linejoin="round"/><polyline points="918.2,709.3 928.9,696 945.1,700.4 931.1,705.6 942.9,711.1 918.9,718.9" fill="none" stroke="#ff0000" stroke-width="1.6" stroke-linecap="round" stroke-linejoin="round"/><polyline points="1102,405 1116.3,390.5 1123.8,409.5 1125,414.5 1112.5,425 1102,405" fill="none" stroke="#ff0000" stroke-width="1.6" stroke-linecap="round" stroke-linejoin="round"/><polyline points="1137,370.5 1120,428.8" fill="none" stroke="#ff0000" stroke-width="1.6" stroke-linecap="round" stroke-linejoin="round"/><polyline points="1138,394.5 1154.5,371.3 1156.3,404.5" fill="none" stroke="#ff0000" stroke-width="1.6" stroke-linecap="round" stroke-linejoin="round"/><polyline points="1170.5,365 1158.8,413.8" fill="none" stroke="#ff0000" stroke-width="1.6" stroke-linecap="round" stroke-linejoin="round"/><polyline points="1158.8,413.8 1182,375 1188.8,400" fill="none" stroke="#ff0000" stroke-width="1.6" stroke-linecap="round" stroke-linejoin="round"/><polyline points="1167.5,396.3 1193,391.3" fill="none" stroke="#ff0000" stroke-width="1.6" stroke-linecap="round" stroke-linejoin="round"/><polyline points="1127,488.8 1136.3,486.3 1131.3,503" fill="none" stroke="#ff0000" stroke-width="1.6" stroke-linecap="round" stroke-linejoin="round"/><polyline points="1159.5,430.5 1168.8,428.8 1162.5,440 1173.8,440" fill="none" stroke="#ff0000" stroke-width="1.6" stroke-linecap="round" stroke-linejoin="round"/><polyline points="1240,578 1253.8,579.5 1238,591.3 1251.3,590.5 1233,612.5" fill="none" stroke="#ff0000" stroke-width="1.6" stroke-linecap="round" stroke-linejoin="round"/><polyline points="1371.7,462.2 1371.3,473.1 1383.6,473.1" fill="none" stroke="#ff0000" stroke-width="1.6" stroke-linecap="round" stroke-linejoin="round"/><polyline points="1382.8,472.4 1381.3,481.3" fill="none" stroke="#ff0000" stroke-width="1.6" stroke-linecap="round" stroke-linejoin="round"/><polyline points="1456.9,727.6 1477,723.1" fill="none" stroke="#ff0000" stroke-width="1.6" stroke-linecap="round" stroke-linejoin="round"/><polyline points="1462.4,722.2 1464.7,739.8" fill="none" stroke="#ff0000" stroke-width="1.6" stroke-linecap="round" stroke-linejoin="round"/><polyline points="1462.4,730.6 1469.8,729.6 1466.6,746.8 1442,738" fill="none" stroke="#ff0000" stroke-width="1.6" stroke-linecap="round" stroke-linejoin="round"/><polyline points="1482.3,748.6 1496.7,727.8 1492.5,757.4" fill="none" stroke="#ff0000" stroke-width="1.6" stroke-linecap="round" stroke-linejoin="round"/><polyline points="1508.7,724.1 1492.2,768.7" fill="none" stroke="#ff0000" stroke-width="1.6" stroke-linecap="round" stroke-linejoin="round"/><polyline points="1500.4,768.7 1516.6,729.2 1523.7,766.7" fill="none" stroke="#ff0000" stroke-width="1.6" stroke-linecap="round" stroke-linejoin="round"/><polyline points="1499.3,755.7 1528,747.4" fill="none" stroke="#ff0000" stroke-width="1.6" stroke-linecap="round" stroke-linejoin="round"/><polyline points="1547.6,721.1 1531.4,784.7" fill="none" stroke="#ff0000" stroke-width="1.6" stroke-linecap="round" stroke-linejoin="round"/><polyline points="1556.7,738 1553.3,773.6" fill="none" stroke="#ff0000" stroke-width="1.6" stroke-linecap="round" stroke-linejoin="round"/><polyline points="1555.2,733.1 1575.8,738.1 1561.5,753.2 1576.8,755.4 1551.1,779.8" fill="none" stroke="#ff0000" stroke-width="1.6" stroke-linecap="round" stroke-linejoin="round"/><polyline points="1565.5,563 1568.9,542.5 1573.8,582.2" fill="none" stroke="#ff0000" stroke-width="1.6" stroke-linecap="round" stroke-linejoin="round"/><polyline points="1597.5,548.1 1586.7,581.5" fill="none" stroke="#ff0000" stroke-width="1.6" stroke-linecap="round" stroke-linejoin="round"/><polyline points="1588.9,578.5 1608.9,553.3 1615.6,578.5" fill="none" stroke="#ff0000" stroke-width="1.6" stroke-linecap="round" stroke-linejoin="round"/><polyline points="1597,569.6 1617.8,568.1" fill="none" stroke="#ff0000" stroke-width="1.6" stroke-linecap="round" stroke-linejoin="round"/><polyline points="1600,639.7 1606.7,632.3 1611.1,637 1596,660.7" fill="none" stroke="#ff0000" stroke-width="1.6" stroke-linecap="round" stroke-linejoin="round"/><polyline points="1590,664.4 1612.6,663.4" fill="none" stroke="#ff0000" stroke-width="1.6" stroke-linecap="round" stroke-linejoin="round"/><polyline points="1619.3,633.3 1612.6,664.4" fill="none" stroke="#ff0000" stroke-width="1.6" stroke-linecap="round" stroke-linejoin="round"/><polyline points="1629.6,637 1623.7,664.4" fill="none" stroke="#ff0000" stroke-width="1.6" stroke-linecap="round" stroke-linejoin="round"/><polyline points="1632.6,636.3 1644.4,646.7 1628.9,651.9 1641.5,660 1617,664.4" fill="none" stroke="#ff0000" stroke-width="1.6" stroke-linecap="round" stroke-linejoin="round"/><polyline points="1625.2,661.5 1643,654.5" fill="none" stroke="#ff0000" stroke-width="1.6" stroke-linecap="round" stroke-linejoin="round"/><polyline points="1783.7,432.5 1800.8,430.8 1787.5,440 1805,443.7 1775.8,450" fill="none" stroke="#ff0000" stroke-width="1.6" stroke-linecap="round" stroke-linejoin="round"/><polyline points="1765.8,449.2 1821.7,452.5" fill="none" stroke="#ff0000" stroke-width="1.6" stroke-linecap="round" stroke-linejoin="round"/><polyline points="1778.3,455.8 1759.7,472.5 1779.2,470" fill="none" stroke="#ff0000" stroke-width="1.6" stroke-linecap="round" stroke-linejoin="round"/><polyline points="1784.7,449.2 1771.3,488.3" fill="none" stroke="#ff0000" stroke-width="1.6" stroke-linecap="round" stroke-linejoin="round"/><polyline points="1792.2,454.2 1790,478.3" fill="none" stroke="#ff0000" stroke-width="1.6" stroke-linecap="round" stroke-linejoin="round"/><polyline points="1788.3,457.8 1804.7,462 1792,468 1803,473.3 1789.7,480.3" fill="none" stroke="#ff0000" stroke-width="1.6" stroke-linecap="round" stroke-linejoin="round"/><polyline points="1784.2,477.5 1781.3,489.7 1789.7,495.8 1793.7,496.3" fill="none" stroke="#ff0000" stroke-width="1.6" stroke-linecap="round" stroke-linejoin="round"/><polyline points="1784.2,480 1792,488" fill="none" stroke="#ff0000" stroke-width="1.6" stroke-linecap="round" stroke-linejoin="round"/><polyline points="1788,499 1795.8,548 1809.5,533.3 1815.1,637.8 1824.9,617.8 1826.7,676.7 1828.5,681 1838.5,580 1859,400 1871.9,288.4" fill="none" stroke="#ff0000" stroke-width="1.6" stroke-linecap="round" stroke-linejoin="round"/><polyline points="1835.5,309.4 1871.9,288.4 1896.8,310.7" fill="none" stroke="#ff0000" stroke-width="1.6" stroke-linecap="round" stroke-linejoin="round"/><polyline points="1796.3,538.3 1777,560 1797.6,557.3" fill="none" stroke="#ff0000" stroke-width="1.6" stroke-linecap="round" stroke-linejoin="round"/><polyline points="1796.5,553.3 1791.3,572" fill="none" stroke="#ff0000" stroke-width="1.6" stroke-linecap="round" stroke-linejoin="round"/><polyline points="1796.3,543.3 1833.3,400 1837.8,385.6" fill="none" stroke="#ff0000" stroke-width="1.6" stroke-linecap="round" stroke-linejoin="round"/><polyline points="1800,533.3 1835.8,400 1839.8,385.6" fill="none" stroke="#ff0000" stroke-width="1.6" stroke-linecap="round" stroke-linejoin="round"/><polyline points="1829.1,389.5 1836.8,383.7 1843.7,394.4" fill="none" stroke="#ff0000" stroke-width="1.6" stroke-linecap="round" stroke-linejoin="round"/><polyline points="1846.7,412.5 1846,402.6 1861,403.1" fill="none" stroke="#ff0000" stroke-width="1.6" stroke-linecap="round" stroke-linejoin="round"/><polyline points="1818,411.5 1868,413" fill="none" stroke="#ff0000" stroke-width="1.6" stroke-linecap="round" stroke-linejoin="round"/><polyline points="1855,413.7 1840,430" fill="none" stroke="#ff0000" stroke-width="1.6" stroke-linecap="round" stroke-linejoin="round"/><polyline points="1805.1,254.3 1826.1,257.2 1807.3,281.6 1822.3,281.2 1797,304.5" fill="none" stroke="#ff0000" stroke-width="1.6" stroke-linecap="round" stroke-linejoin="round"/><polyline points="1835.5,264 1815.4,311.7" fill="none" stroke="#ff0000" stroke-width="1.6" stroke-linecap="round" stroke-linejoin="round"/><polyline points="1833,298.1 1818.4,313.7 1839.8,312.1" fill="none" stroke="#ff0000" stroke-width="1.6" stroke-linecap="round" stroke-linejoin="round"/><polyline points="1835.5,294.2 1842.7,321.4" fill="none" stroke="#ff0000" stroke-width="1.6" stroke-linecap="round" stroke-linejoin="round"/><polyline points="1811.6,318.5 1814.5,360.4 1834.9,333.1" fill="none" stroke="#ff0000" stroke-width="1.6" stroke-linecap="round" stroke-linejoin="round"/><polyline points="1823.3,686.7 1833.3,685.6 1816.7,703.3 1830,703.3 1810,719.6" fill="none" stroke="#ff0000" stroke-width="1.6" stroke-linecap="round" stroke-linejoin="round"/><polyline points="1823.3,686.7 1824.4,697.8" fill="none" stroke="#ff0000" stroke-width="1.6" stroke-linecap="round" stroke-linejoin="round"/><polyline points="1840.4,682.2 1817.3,730" fill="none" stroke="#ff0000" stroke-width="1.6" stroke-linecap="round" stroke-linejoin="round"/><polyline points="1836.7,708.9 1824.4,715.6 1828.4,739.6 1841.1,733.3" fill="none" stroke="#ff0000" stroke-width="1.6" stroke-linecap="round" stroke-linejoin="round"/><polyline points="1836.7,708.9 1840.4,723.3" fill="none" stroke="#ff0000" stroke-width="1.6" stroke-linecap="round" stroke-linejoin="round"/><polyline points="35,816 38.5,809.5" fill="none" stroke="#ff0000" stroke-width="1.6" stroke-linecap="round" stroke-linejoin="round"/><polyline points="1474.5,715 1530.5,578" fill="none" stroke="#000" stroke-width="3.6" stroke-linecap="butt" stroke-linejoin="round"/><polyline points="1474.5,715 1530.5,578" fill="none" stroke="#aaa" stroke-width="0.7" stroke-linecap="butt" stroke-linejoin="round" stroke-dasharray="1 1.4"/><polyline points="1632,635 1688,498" fill="none" stroke="#000" stroke-width="3.6" stroke-linecap="butt" stroke-linejoin="round"/><polyline points="1632,635 1688,498" fill="none" stroke="#aaa" stroke-width="0.7" stroke-linecap="butt" stroke-linejoin="round" stroke-dasharray="1 1.4"/><polyline points="1791.7,547 1848,410.3" fill="none" stroke="#000" stroke-width="3.6" stroke-linecap="butt" stroke-linejoin="round"/><polyline points="1791.7,547 1848,410.3" fill="none" stroke="#aaa" stroke-width="0.7" stroke-linecap="butt" stroke-linejoin="round" stroke-dasharray="1 1.4"/></svg><svg class="abs" style="left:14px;top:1015px" width="14" height="14" viewBox="0 0 14 14"><rect x="0" y="0" width="14" height="14" fill="#58001a"/><rect x="1" y="1" width="12" height="12" rx="3.500" fill="#fff" stroke="#a8aeb4" stroke-width=".6"/><rect x="2.700" y="3.700" width="8.600" height="6.600" fill="#fff" stroke="#b8000c" stroke-width="1.600"/></svg><svg class="abs" style="left:34px;top:1015px" width="14" height="14" viewBox="0 0 14 14"><rect x="0" y="1" width="14" height="12" rx="2" fill="#fff" stroke="#c8ccd0" stroke-width=".5"/><rect x="2" y="0" width="10" height="7" fill="#b8000c"/><path d="M4 3h6M4 5h6" stroke="#fff" stroke-width="1"/><rect x="0" y="8" width="14" height="6" fill="#58001a"/><rect x="1" y="9" width="1" height="1" fill="#fff"/><rect x="3" y="9" width="1" height="1" fill="#fff"/><rect x="2" y="11.500" width="10" height="2.500" fill="#fff"/><rect x="3" y="12.300" width="8" height="1.700" fill="#b8000c"/></svg><svg class="abs" style="left:54px;top:1015px" width="14" height="14" viewBox="0 0 14 14"><rect x=".5" y=".5" width="13" height="13" rx="3.500" fill="#fff" stroke="#8a9098" stroke-width=".8"/><path d="M6 .5h3M6 2.500h3" stroke="#58001a" stroke-width="1"/><path d="M6 4h3v2.500h2L7.500 10 4 6.500h2z" fill="#58001a"/><path d="M0 10h2v2h10v-2h2v4H0z" fill="#b8000c"/></svg><svg class="abs" style="left:74px;top:1015px" width="14" height="14" viewBox="0 0 14 14"><rect x=".5" y=".5" width="13" height="13" rx="3.500" fill="#fff" stroke="#8a9098" stroke-width=".8"/><path d="M7.500 1L11 4.500H9V8H6V4.500H4z" fill="#58001a"/><path d="M6 9.500h3" stroke="#58001a" stroke-width="1"/><path d="M0 10h2v2h10v-2h2v4H0z" fill="#b8000c"/></svg><svg class="abs" style="left:94px;top:1015px" width="14" height="14" viewBox="0 0 14 14"><rect x=".5" y=".5" width="13" height="13" rx="3.500" fill="#fff" stroke="#70787f" stroke-width=".8"/><path d="M1 2.500L3 1v1h3v6H4V4H3v1zM13 2.500L11 1v1H8v6h2V4h1v1z" fill="#58001a"/><path d="M4 8.500h2M8 8.500h2" stroke="#58001a" stroke-width="1"/><path d="M2 10h4v1.500H4V14H2zM12 10H8v1.500h2V14h2z" fill="#b8000c"/></svg><svg class="abs" style="left:1895px;top:810px" width="14" height="16" viewBox="0 0 14 16"><rect x=".5" y=".5" width="22" height="15" rx="7.500" fill="#f6f6f6" stroke="#b4b4b4"/><path d="M5 4.500l7.500 7M12.500 4.500l-7.500 7" stroke="#c00818" stroke-width="1.900"/></svg><svg class="abs" style="left:1895px;top:825px" width="14" height="16" viewBox="0 0 14 16"><rect x=".5" y=".5" width="22" height="15" rx="7.500" fill="#f6f6f6" stroke="#b4b4b4"/><circle cx="9" cy="8" r="4.600" fill="none" stroke="#580820" stroke-width="1.700"/><circle cx="9" cy="8" r="2.100" fill="#580820"/></svg><div class="abs" id="task"></div><svg class="abs" style="left:6px;top:1040px" width="42" height="40" viewBox="0 0 42 40"><defs><radialGradient id="orb" cx=".5" cy=".35" r=".7"><stop offset="0" stop-color="#9fd4f4"/><stop offset=".5" stop-color="#3a86c8"/><stop offset="1" stop-color="#123c78"/></radialGradient></defs><circle cx="21" cy="21" r="19" fill="#1a4a7a" opacity=".55"/><circle cx="21" cy="21" r="17.500" fill="url(#orb)" stroke="#163c70" stroke-width="1.200"/><ellipse cx="21" cy="12" rx="13" ry="8" fill="#fff" opacity=".28"/><path d="M11 15c3-1.500 6-1.500 9 0l-1.500 6c-3-1.500-6-1.500-9 0z" fill="#e8602c"/><path d="M21.500 15.500c3 1.500 6 1.500 9 0l-1.500 6c-3 1.500-6 1.500-9 0z" fill="#8cc43c"/><path d="M9 22.500c3-1.500 6-1.500 9 0l-1.500 6c-3-1.500-6-1.500-9 0z" fill="#3a9ae0"/><path d="M19.500 23c3 1.500 6 1.500 9 0l-1.500 6c-3 1.500-6 1.500-9 0z" fill="#f8c820"/></svg><svg class="abs" style="left:72px;top:1044px" width="34" height="34" viewBox="0 0 34 34"><path d="M2 7h10l2 2h16v17H2z" fill="#e8d088" stroke="#c8a850" stroke-width=".8"/><path d="M5 5h10l2 2h14v17H5z" fill="#f4e4a8" stroke="#c8a850" stroke-width=".8"/><rect x="6" y="6" width="3" height="1.500" fill="#30a030"/><rect x="12" y="7" width="3" height="1.500" fill="#d03030"/><rect x="20" y="9" width="3" height="1.500" fill="#3070d0"/><path d="M6 22h22v8H22v-4H12v4H6z" fill="#a8d8f4" stroke="#5aa0d0" stroke-width=".8"/></svg><svg class="abs" style="left:137px;top:1045px" width="28" height="28" viewBox="0 0 28 28"><rect width="28" height="28" fill="#c00808"/><rect width="28" height="14" fill="#d81818"/><path d="M5 21c4-2 8-8 8.500-13 .3-2.500 2-2.500 1.800 0-.3 5 4 10 8 10.500 2 .2 2-1.500 0-1.500-5 0-13 2-17 5-1.500 1-2.500 0-1.300-1z" fill="none" stroke="#fff" stroke-width="1.300"/></svg><svg class="abs" style="left:197px;top:1044px" width="32" height="32" viewBox="0 0 32 32"><defs><radialGradient id="g3" cx=".4" cy=".3" r=".8"><stop offset="0" stop-color="#5868f0"/><stop offset="1" stop-color="#0810a8"/></radialGradient></defs><circle cx="16" cy="16" r="15.500" fill="url(#g3)"/><text x="16" y="22.500" text-anchor="middle" font-family="Liberation Serif,serif" font-style="italic" font-size="19" fill="#fff" letter-spacing="-1">3G</text></svg><svg class="abs" style="left:259px;top:1047px" width="30" height="28" viewBox="0 0 30 28"><rect x="8" y="2" width="20" height="22" fill="#88b0d8" stroke="#a8c8e8"/><rect x="5" y="3" width="20" height="22" fill="#98c0e0" stroke="#b8d4ec"/><rect x="2" y="1" width="20" height="22" fill="#5898d0" stroke="#a8c8e8"/><circle cx="12" cy="12" r="8" fill="#f08820" stroke="#f8c070" stroke-width="1"/><path d="M9.500 7.500v9l7.500-4.500z" fill="#fff"/></svg><div class="tk" style="left:308px"></div><svg class="abs" style="left:320px;top:1044px" width="34" height="34" viewBox="0 0 34 34"><defs><radialGradient id="ff" cx=".7" cy=".2" r=".9"><stop offset="0" stop-color="#fff060"/><stop offset=".4" stop-color="#ff9a18"/><stop offset="1" stop-color="#e82848"/></radialGradient></defs><circle cx="17" cy="18" r="14.500" fill="url(#ff)"/><circle cx="15" cy="17" r="7" fill="#6838c8"/><path d="M8 14c3-2 6-1 8 1 2 2 4 2 6 1-1 4-5 6-9 5-3-1-5-4-5-7z" fill="#ff7a18"/><path d="M24 2c3 3 5 6 5 10l-4-3z" fill="#ffd838"/></svg><div class="tk" style="left:370px;background:linear-gradient(#a8ccc0,#7fb0a2 50%,#6aa092 51%,#88b8aa)"></div><div class="abs" style="left:383px;top:1044px;width:32px;height:33px;background:#fff"></div><svg class="abs" style="left:383px;top:1044px" width="32" height="33" viewBox="0 0 32 33"><rect x="11" y="15" width="2.500" height="6" fill="#d01828"/><rect x="15" y="11" width="2.500" height="10" fill="#203878"/><rect x="19" y="6" width="2.500" height="15" fill="#203878"/><text x="16" y="29" text-anchor="middle" font-family="Liberation Sans,sans-serif" font-size="5.500" font-weight="bold" fill="#203060">ePROMAK</text></svg><div class="tray" style="left:1708px;top:1051px;font-size:12px">PL</div><svg class="abs" style="left:1729px;top:1051px" width="16" height="14" viewBox="0 0 16 14"><rect x=".5" y="4.500" width="14" height="8" rx="1" fill="none" stroke="#e0e8e4" stroke-width="1"/><path d="M2.500 7h10M2.500 9h10M4 11h7" stroke="#e0e8e4" stroke-width=".9" stroke-dasharray="1.200 .8"/><path d="M7 4c0-2 3-2 6-3" stroke="#e0e8e4" fill="none"/></svg><svg class="abs" style="left:1757px;top:1058px" width="9" height="6"><path d="M0 5.500L4.500 0 9 5.500z" fill="#fff"/></svg><svg class="abs" style="left:1777px;top:1053px" width="18" height="17" viewBox="0 0 18 17"><path d="M2 1v15" stroke="#fff" stroke-width="1.400"/><path d="M4 2c3-1.500 4 1 7 0 1 0 3 0 5 .5-2 2-2 3-4 4.500-2 1-4-1-8 1z" fill="#fff"/></svg><svg class="abs" style="left:1802px;top:1055px" width="17" height="12" viewBox="0 0 17 12"><rect x="1" y="9" width="2" height="2" fill="#fff"/><rect x="4" y="7" width="2" height="4" fill="#fff"/><rect x="7" y="5" width="2" height="6" fill="#fff"/><rect x="10" y="3" width="2" height="8" fill="#fff"/><rect x="13" y="1" width="2" height="10" fill="#fff"/></svg><div class="tray" style="left:1830px;top:1046px;width:70px;text-align:center;font-size:11px">21:55</div><div class="tray" style="left:1830px;top:1063px;width:70px;text-align:center;font-size:11.300px">2019-10-17</div><div class="abs" style="left:1906px;top:1041px;width:14px;height:39px;border-left:1px solid #9cc0b4;background:linear-gradient(135deg,#9cc0b4,#3f8070 50%,#2a6a5c)"></div></body></html>
